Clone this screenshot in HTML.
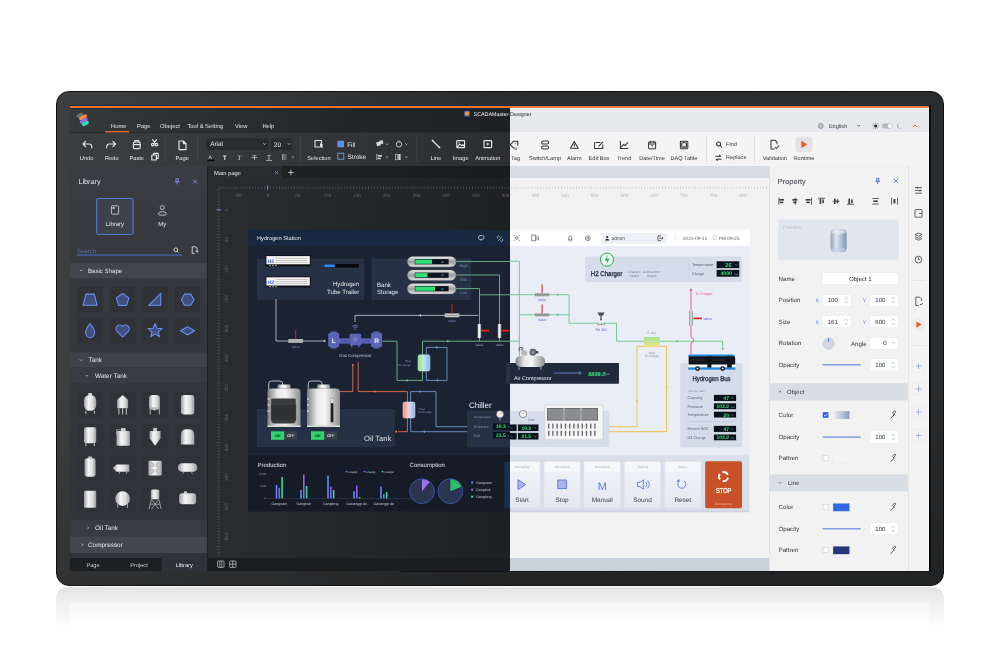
<!DOCTYPE html>
<html><head><meta charset="utf-8">
<style>
*{margin:0;padding:0;box-sizing:border-box}
html,body{width:1000px;height:667px;overflow:hidden;background:#fff;font-family:"Liberation Sans",sans-serif}
.a{position:absolute}
svg.a{will-change:transform;text-rendering:geometricPrecision}
.t{position:absolute;white-space:nowrap;line-height:1}
</style></head><body>
<!-- reflection -->
<div class="a" style="left:56px;top:587px;width:888px;height:15.5px;border-radius:12px 12px 0 0;background:linear-gradient(#e2e2e2,#ececec 60%,#f0f0f0);"></div><div class="a" style="left:56px;top:602.5px;width:888px;height:26px;background:linear-gradient(#f7f7f7,#fcfcfc 60%,#fff);"></div><div class="a" style="left:56px;top:602.5px;width:14px;height:26px;background:linear-gradient(#efefef,#fafafa 70%,#fff);"></div><div class="a" style="left:929px;top:602.5px;width:15px;height:26px;background:linear-gradient(#efefef,#fafafa 70%,#fff);"></div>
<!-- monitor -->
<div class="a" style="left:56px;top:91px;width:888px;height:495px;border-radius:13px;background:linear-gradient(180deg,rgba(0,0,0,0) 60%,rgba(0,0,0,.2) 100%),linear-gradient(90deg,#3d3e3f,#353637 22%,#2c2d2e 48%,#2a2b2c);border:1px solid #0e0f10"></div>
<!-- screen -->
<div class="a" style="left:928px;top:105px;width:2.5px;height:467px;background:#0c0d0e"></div><div class="a" style="left:400px;top:571px;width:530px;height:1px;background:#141516"></div>
<!-- orange line -->
<div class="a" style="left:70px;top:105px;width:440px;height:4px;background:#0b3050"></div><div class="a" style="left:510px;top:105px;width:419px;height:1px;background:#0b3050"></div><div class="a" style="left:70px;top:106px;width:859px;height:1.8px;background:#f47220"></div>


<!-- SEC1 dark title+ribbon -->
<div class="a" style="left:70px;top:109px;width:440px;height:23px;background:linear-gradient(90deg,#37383c,#2c2d31 35%,#242528 65%,#1f2023)"></div>
<div class="a" style="left:70px;top:132px;width:440px;height:34px;background:linear-gradient(90deg,#3b3d41,#343639 45%,#2c2e32);border-top:1px solid #2a2b2e"></div>
<svg class="a" style="left:0;top:0" width="1000" height="667" font-family="Liberation Sans">
 <!-- logo -->
 <g transform="translate(83.4,119.6) rotate(-28)">
  <rect x="-4.6" y="-7.2" width="7" height="3.4" rx="1.7" fill="#6e7176"/>
  <rect x="-3.6" y="-4" width="8.6" height="3.6" rx="1.8" fill="#f8903a"/>
  <rect x="-4.6" y="-0.6" width="8.6" height="3.6" rx="1.8" fill="#8d6cf2"/>
  <rect x="-3.8" y="2.6" width="7.4" height="3.6" rx="1.8" fill="#38e0a0"/>
 </g>
 <g fill="#e8e9ec" font-size="5.8">
  <text x="111" y="127.5">Home</text>
  <text x="137" y="127.5">Page</text>
  <text x="160" y="127.5">Obeject</text>
  <text x="187.4" y="127.5">Tool &amp; Setting</text>
  <text x="235" y="127.5">View</text>
  <text x="262.4" y="127.5">Help</text>
 </g>
 <rect x="105" y="131" width="24" height="1.4" fill="#f26a21"/>
 <!-- title -->
 <rect x="464" y="110.6" width="6" height="6" fill="#2b4fb0"/>
 <circle cx="467" cy="113.6" r="2.4" fill="#f7941d"/>
 <text x="473.6" y="115.6" font-size="5.35" fill="#f2f2f2">SCADAMaster-Designer</text>
 <!-- ribbon icons -->
 <g stroke="#e4e5e8" stroke-width="1.15" fill="none" stroke-linecap="round" stroke-linejoin="round">
  <!-- undo -->
  <path d="M83 144 l2.6 -2.6 M83 144 l2.6 2.6 M83 144 h6 a2.8 2.8 0 0 1 2.8 2.8 v1"/>
  <!-- redo -->
  <path d="M115.5 144 l-2.6 -2.6 M115.5 144 l-2.6 2.6 M115.5 144 h-6 a2.8 2.8 0 0 0 -2.8 2.8 v1"/>
  <!-- paste -->
  <rect x="133.4" y="142" width="6.8" height="6.6" rx="1.2"/>
  <path d="M134.8 142 v-1.4 h4 v1.4 M133.4 144.6 h6.8"/>
  <!-- cut -->
  <circle cx="152.8" cy="144.6" r="1.3"/><circle cx="156.4" cy="144.6" r="1.3"/>
  <path d="M153.6 143.6 l3 -4 M155.6 143.6 l-3 -4"/>
  <!-- copy -->
  <rect x="151.8" y="155" width="4.6" height="5" rx="0.6"/>
  <path d="M153.6 155 v-1.7 h4.6 v5 h-1.8"/>
  <!-- page -->
  <path d="M179 141 h4.4 l2.6 2.6 v6 h-7 z M183.4 141 v2.6 h2.6"/>
  <!-- selection -->
  <rect x="315" y="140.5" width="6.5" height="6.5" stroke-dasharray="1.2 0.6"/>
  <!-- line -->
  <path d="M432.5 140.5 l7 7"/>
  <!-- image -->
  <rect x="456.8" y="140.6" width="7.8" height="7" rx="0.6"/>
  <path d="M457.5 146.5 l2.4 -2.4 l1.8 1.6 l1.2 -1 l1.6 1.8"/>
  <!-- animation -->
  <rect x="484" y="140.6" width="7.6" height="7" rx="0.6"/>
 </g>
 <path d="M320 143.2 l3.5 1.6 l-1.5 0.6 l1.2 1.8 l-0.8 0.5 l-1.2 -1.8 l-1.2 1.1 z" fill="#e8e8e8"/>
 <circle cx="432.5" cy="140.5" r="0.9" fill="#d3d5d9"/><circle cx="439.5" cy="147.5" r="0.9" fill="#d3d5d9"/>
 <circle cx="459" cy="142.8" r="0.7" fill="#d3d5d9"/>
 <path d="M486.7 142.4 l3 1.7 l-3 1.7 z" fill="#d3d5d9"/>
 <g fill="#e9eaed" font-size="5.7" text-anchor="middle">
  <text x="86.6" y="160.2">Undo</text>
  <text x="111.9" y="160.2">Redo</text>
  <text x="136.7" y="160.2">Paste</text>
  <text x="182.2" y="160.2">Page</text>
  <text x="319" y="160.2">Selection</text>
  <text x="436" y="160.2">Line</text>
  <text x="460.7" y="160.2">Image</text>
  <text x="487.8" y="160.2">Animation</text>
 </g>
 <g fill="#45474c">
  <rect x="165" y="136" width="0.8" height="26"/>
  <rect x="197.2" y="136" width="0.8" height="26"/>
  <rect x="300" y="136" width="0.8" height="26"/>
  <rect x="416.6" y="136" width="0.8" height="26"/>
 </g>
 <!-- font boxes -->
 <rect x="206.8" y="138.3" width="61.4" height="11.5" fill="#2a2b2f"/>
 <rect x="271.2" y="138.3" width="21.4" height="11.5" fill="#2a2b2f"/>
 <text x="210.2" y="146.4" font-size="6.4" fill="#e6e7ea">Arial</text>
 <text x="273.8" y="146.6" font-size="6.6" fill="#e6e7ea">20</text>
 <g stroke="#d8dadd" stroke-width="0.75" fill="none">
  <path d="M263.4 143.4 l1.1 1.1 l1.1 -1.1 M288 143.4 l1.1 1.1 l1.1 -1.1"/>
  <path d="M291.6 156.6 l1.1 1.1 l1.1 -1.1"/>
  <path d="M386 143.6 l1.1 1.1 l1.1 -1.1 M405.4 143.6 l1.1 1.1 l1.1 -1.1 M386 156.6 l1.1 1.1 l1.1 -1.1 M405.4 156.6 l1.1 1.1 l1.1 -1.1"/>
 </g>
 <!-- format row -->
 <g fill="#e0e1e4" font-size="6.5">
  <text x="208.5" y="158.5" font-size="5">A</text>
  <text x="222.8" y="160" font-weight="bold">T</text>
  <text x="237.6" y="160" font-style="italic" font-family="Liberation Serif">T</text>
  <text x="252.4" y="160">T</text>
  <text x="267" y="160">T</text>
 </g>
 <rect x="207.3" y="159.6" width="7.2" height="1.6" fill="#0a0a0a"/>
 <rect x="251.4" y="157" width="6" height="0.6" fill="#e0e1e4"/>
 <rect x="266" y="160.4" width="6" height="0.6" fill="#e0e1e4"/>
 <g fill="#9a9ca0"><rect x="282" y="154.5" width="4.5" height="1"/><rect x="282" y="156.5" width="4.5" height="1"/><rect x="282" y="158.5" width="4.5" height="1"/><rect x="282" y="154" width="1" height="6"/></g>
 <!-- fill / stroke -->
 <rect x="337.8" y="141" width="6" height="6" fill="#5b8ee6" stroke="#7aa5f0" stroke-width="0.5"/>
 <rect x="337.8" y="153.2" width="6" height="6" fill="none" stroke="#6d9be8" stroke-width="0.9"/>
 <text x="347.2" y="146.6" font-size="6.4" fill="#e6e7ea">Fill</text>
 <text x="347.6" y="158.8" font-size="6.4" fill="#e6e7ea">Stroke</text>
 <!-- group icons -->
 <g fill="#d3d5d9">
  <rect x="376.5" y="142" width="4" height="4" transform="rotate(-15 378 144)"/>
  <rect x="379.5" y="140.5" width="3.5" height="3.5" transform="rotate(-15 381 142)"/>
  <rect x="376.5" y="154" width="0.8" height="6"/><rect x="378" y="155" width="4" height="1.6"/><rect x="378" y="157.6" width="2.8" height="1.6"/>
  <rect x="395.5" y="154.2" width="1.8" height="5.6" fill="none" stroke="#d3d5d9" stroke-width="0.6"/><rect x="398.4" y="154" width="2.2" height="6"/>
 </g>
 <circle cx="399" cy="144.3" r="2.7" fill="none" stroke="#d3d5d9" stroke-width="0.9"/>
 <rect x="398.6" y="140.4" width="0.8" height="2" fill="#d3d5d9"/>
</svg>

<!-- LIGHT title bar -->
<div class="a" style="left:510px;top:108px;width:419px;height:24px;background:#e6e8ec"></div>

<!-- LIGHT ribbon -->
<div class="a" style="left:510px;top:132px;width:419px;height:34px;background:#f4f4f5"></div>

<!-- SEC2 light title+ribbon -->
<svg class="a" style="left:0;top:0" width="1000" height="667" font-family="Liberation Sans">
 <defs><clipPath id="cl"><rect x="510" y="100" width="420" height="40"/></clipPath></defs>
 <rect x="510" y="107.8" width="419" height="1.2" fill="#e2f6f6"/>
 <text x="473.6" y="115.6" font-size="5.35" fill="#2e3034" clip-path="url(#cl)">SCADAMaster-Designer</text>
 <!-- title right -->
 <circle cx="820.8" cy="125.9" r="2.6" fill="#b9bcc3" stroke="#8f939a" stroke-width="0.6"/>
 <text x="828.9" y="128" font-size="5.6" fill="#3c3f44">English</text>
 <path d="M857.3 125 l1.3 1.3 l1.3 -1.3" stroke="#3c3f44" stroke-width="0.8" fill="none"/>
 <circle cx="875.7" cy="125.9" r="1.5" fill="#222"/>
 <g stroke="#222" stroke-width="0.6"><path d="M875.7 122.6 v1 M875.7 128.2 v1 M872.4 125.9 h1 M878 125.9 h1 M873.4 123.6 l0.7 0.7 M877.3 127.5 l0.7 0.7 M873.4 128.2 l0.7 -0.7 M877.3 124.3 l0.7 -0.7"/></g>
 <rect x="882" y="123.6" width="10.5" height="4.8" rx="2.4" fill="#b5b9c0"/>
 <circle cx="889.8" cy="126" r="2.1" fill="#fff"/>
 <path d="M899.6 123.4 a2.6 2.6 0 1 0 1.6 4.6 a2.2 2.2 0 0 1 -1.6 -4.6z" fill="#9ea3ab"/>
 <path d="M913 127 l2 -2 l2 2" stroke="#f05a22" stroke-width="0.9" fill="none"/>
 <!-- ribbon icons -->
 <g transform="translate(0 0.9)" stroke="#33363c" stroke-width="1.05" fill="none" stroke-linecap="round" stroke-linejoin="round">
  <!-- tag -->
  <path d="M513.4 140.4 h4.4 v4 M513.4 140.4 l-3 3.4 l3 3.4 h0.8"/>
  <!-- switch/lamp -->
  <rect x="541.6" y="140.2" width="7" height="3" rx="1.5"/><rect x="541.6" y="145.2" width="7" height="3" rx="1.5"/>
  <!-- alarm -->
  <path d="M574.3 140.6 l3.9 6.8 h-7.8 z M574.3 143 v2.1"/>
  <!-- edit box -->
  <path d="M596 141.6 h4 M602.8 144 v3.6 h-8.2 v-6"/>
  <path d="M598.8 145.3 l4 -4"/>
  <!-- trend -->
  <path d="M620.4 140.4 v7.2 h7.5 M621.6 146 l2 -2.6 l1.6 1.4 l2.4 -3"/>
  <!-- date/time -->
  <rect x="648.6" y="141" width="7" height="6.8" rx="0.8"/>
  <path d="M650.4 140 v1.6 M653.8 140 v1.6 M648.6 143 h7 M651.8 144.4 l0.8 0.8"/>
  <!-- daq table -->
  <rect x="680.4" y="140.4" width="7.4" height="7.4" rx="0.6"/>
  <rect x="681.8" y="141.8" width="4.6" height="4.6" rx="0.2"/>
  <!-- find -->
  <circle cx="718.6" cy="143" r="2"/><path d="M720.2 144.6 l1.6 1.6"/>
  <!-- replace -->
  <path d="M715.8 155.4 h5 l-1.2 -1.2 M721.2 158.4 h-5 l1.2 1.2"/>
  <!-- validation -->
  <path d="M777 142.8 v-1.6 l-1.8 -1.8 h-4.2 v8.6 h3.4 M771 139.4"/>
  <path d="M775.4 146.4 l1.2 1.2 l2.2 -2.8"/>
 </g>
 <circle cx="515.8" cy="143" r="0.6" fill="#33363c"/><text x="514.6" y="149.6" font-size="3.8" font-weight="bold" fill="#33363c">D</text>
 <path d="M682.8 146.6 l1.2 -1.2 l0.8 0.8 l0.8 -0.6 v1z" fill="#33363c"/>
 <rect x="795.5" y="136.7" width="17.2" height="15.3" rx="3" fill="#e4e4e6"/>
 <path d="M801.3 140.8 l6 3.6 l-6 3.6 z" fill="#f05a22"/>
 <g fill="#33363c" font-size="5.6" text-anchor="middle">
  <text x="515.5" y="160.2">Tag</text>
  <text x="545" y="160.2">Switch/Lamp</text>
  <text x="574.3" y="160.2">Alarm</text>
  <text x="599" y="160.2">Edit Box</text>
  <text x="624.1" y="160.2">Trend</text>
  <text x="652" y="160.2">Date/Time</text>
  <text x="684" y="160.2">DAQ Table</text>
  <text x="774.8" y="160.2">Validation</text>
  <text x="804" y="160.2">Runtime</text>
 </g>
 <text x="726" y="146" font-size="5.6" fill="#3c3f44">Find</text>
 <text x="726" y="159.2" font-size="5.6" fill="#3c3f44">Replace</text>
 <rect x="706" y="136" width="0.8" height="26" fill="#dcdde0"/>
 <rect x="754.2" y="136" width="0.8" height="26" fill="#dcdde0"/>
</svg>

<!-- DARK library panel -->
<div class="a" style="left:70px;top:166px;width:137px;height:392px;background:linear-gradient(#393c41,#34373c 40%,#303338)"></div>
<div class="a" style="left:207px;top:166px;width:1px;height:405px;background:#1f2023"></div>

<!-- SEC3 library -->
<svg class="a" style="left:0;top:0" width="1000" height="667" font-family="Liberation Sans">
 <defs>
  <linearGradient id="mg" x1="0" x2="1" y1="0" y2="0">
   <stop offset="0" stop-color="#9a9c9f"/><stop offset="0.35" stop-color="#f6f6f6"/><stop offset="0.7" stop-color="#dcdcdc"/><stop offset="1" stop-color="#9a9c9f"/>
  </linearGradient>
 </defs>
 <text x="78.5" y="184.2" font-size="7.2" fill="#e6e7ea">Library</text>
 <g stroke="#7b8cf0" stroke-width="0.9" fill="none">
  <path d="M175.4 178.8 h3.4 M176 178.8 v3 h2.2 v-3 M174.8 181.8 h4.6 M177.1 181.8 v2.6"/>
  <path d="M193 179.5 l4.2 4.2 M197.2 179.5 l-4.2 4.2"/>
 </g>
 <rect x="96.7" y="198.4" width="36.3" height="36" rx="1.5" fill="#3d424b" stroke="#5a7fd9" stroke-width="1"/>
 <rect x="111.4" y="205.8" width="7.2" height="8.4" rx="1" fill="none" stroke="#c8cbd1" stroke-width="0.9"/>
 <rect x="112.6" y="207" width="2" height="2" fill="#c8cbd1"/>
 <text x="114.9" y="226" font-size="6" fill="#e6e7ea" text-anchor="middle">Library</text>
 <g stroke="#c8cbd1" stroke-width="0.9" fill="none">
  <circle cx="162.3" cy="207.6" r="2"/>
  <path d="M158.3 214.2 a4 2.6 0 0 1 8 0 a4 1 0 0 1 -8 0"/>
 </g>
 <text x="162.3" y="226" font-size="6" fill="#e6e7ea" text-anchor="middle">My</text>
 <text x="77" y="252.6" font-size="6" fill="#5d6f9e">Search</text>
 <rect x="77" y="254.5" width="105" height="1" fill="#4b6fd0"/>
 <g stroke="#e0e2e6" stroke-width="0.9" fill="none">
  <circle cx="175.8" cy="249.8" r="1.9"/><path d="M177.2 251.2 l1.4 1.4"/>
  <path d="M192.2 246.8 h3.4 l1.4 1.4 v2.4 M192.2 246.8 v6.6 h2.4"/>
 </g>
 <path d="M195.6 251.4 h3 M197.1 249.9 v3" stroke="#e0e2e6" stroke-width="0.7"/>
 <!-- headers -->
 <rect x="70" y="262.7" width="137" height="15.7" fill="#41454c"/>
 <rect x="70" y="352.4" width="137" height="15.1" fill="#3f434a"/>
 <rect x="70" y="367.5" width="137" height="15.7" fill="#373b42"/>
 <rect x="70" y="519.4" width="137" height="17.1" fill="#373b42"/>
 <rect x="70" y="536.5" width="137" height="16.5" fill="#42474f"/>
 <g stroke="#b8bcc4" stroke-width="0.8" fill="none">
  <path d="M79.8 269.8 l1.3 1.3 l1.3 -1.3 M79.8 359.4 l1.3 1.3 l1.3 -1.3 M85.5 375 l1.3 1.3 l1.3 -1.3"/>
  <path d="M87.5 526.5 l1.3 1.3 l-1.3 1.3 M81.5 543.5 l1.3 1.3 l-1.3 1.3"/>
 </g>
 <g fill="#e6e7ea" font-size="6.4">
  <text x="88" y="272.8" font-size="6.1">Basic Shape</text>
  <text x="88.5" y="362.2">Tank</text>
  <text x="95" y="377.6">Water Tank</text>
  <text x="95" y="530.4">Oil Tank</text>
  <text x="88" y="547.2">Compressor</text>
 </g>
 <rect x="77.5" y="287" width="25.2" height="25.4" fill="#2f3237"/>
 <g transform="translate(90.1 299.7) scale(1.4) translate(-90.1 -299.7)"><path d="M87.1 295.7 h6 l2 8 h-10z" fill="#3e4f80" stroke="#6f90f2" stroke-width="0.75"/></g>
 <rect x="110" y="287" width="25.2" height="25.4" fill="#2f3237"/>
 <g transform="translate(122.6 299.7) scale(1.4) translate(-122.6 -299.7)"><path d="M122.6 295.2 l4.5 3.3 l-1.7 5.3 h-5.6 l-1.7 -5.3z" fill="#3e4f80" stroke="#6f90f2" stroke-width="0.75"/></g>
 <rect x="142.5" y="287" width="25.2" height="25.4" fill="#2f3237"/>
 <g transform="translate(155.1 299.7) scale(1.4) translate(-155.1 -299.7)"><path d="M159.1 295.2 v8.5 h-8.5z" fill="#3e4f80" stroke="#6f90f2" stroke-width="0.75"/></g>
 <rect x="175" y="287" width="25.2" height="25.4" fill="#2f3237"/>
 <g transform="translate(187.6 299.7) scale(1.4) translate(-187.6 -299.7)"><path d="M183.1 299.7 l2.3 -4 h4.5 l2.3 4 l-2.3 4 h-4.5z" fill="#3e4f80" stroke="#6f90f2" stroke-width="0.75"/></g>
 <rect x="77.5" y="318" width="25.2" height="25.4" fill="#2f3237"/>
 <g transform="translate(90.1 330.7) scale(1.4) translate(-90.1 -330.7)"><path d="M90.1 325.7 q4 5 3 7 a3 3 0 0 1 -6 0 q-1 -2 3 -7z" fill="#3e4f80" stroke="#6f90f2" stroke-width="0.75"/></g>
 <rect x="110" y="318" width="25.2" height="25.4" fill="#2f3237"/>
 <g transform="translate(122.6 330.7) scale(1.4) translate(-122.6 -330.7)"><path d="M122.6 335.2 l-4.2 -4.2 a2.4 2.4 0 0 1 4.2 -3.4 a2.4 2.4 0 0 1 4.2 3.4z" fill="#3e4f80" stroke="#6f90f2" stroke-width="0.75"/></g>
 <rect x="142.5" y="318" width="25.2" height="25.4" fill="#2f3237"/>
 <g transform="translate(155.1 330.7) scale(1.4) translate(-155.1 -330.7)"><path d="M155.1 325.7 l1.4 3.2 l3.5 0.3 l-2.7 2.3 l0.9 3.4 l-3.1 -1.8 l-3.1 1.8 l0.9 -3.4 l-2.7 -2.3 l3.5 -0.3z" fill="#3e4f80" stroke="#6f90f2" stroke-width="0.75"/></g>
 <rect x="175" y="318" width="25.2" height="25.4" fill="#2f3237"/>
 <g transform="translate(187.6 330.7) scale(1.4) translate(-187.6 -330.7)"><path d="M182.6 330.7 l5 -3 l5 3 l-5 3z" fill="#3e4f80" stroke="#6f90f2" stroke-width="0.75"/></g>
 <rect x="77.5" y="392" width="25.2" height="25.4" fill="#2f3237"/>
 <g transform="translate(90.1 404.7) scale(1.22) translate(-90.1 -404.7)"><rect x="85.1" y="396.7" width="10" height="13" rx="4.5" fill="url(#mg)"/><rect x="88.6" y="395.2" width="3" height="2" fill="#ddd"/><rect x="86.1" y="409.7" width="1" height="2.5" fill="#aaa"/><rect x="93.1" y="409.7" width="1" height="2.5" fill="#aaa"/></g>
 <rect x="110" y="392" width="25.2" height="25.4" fill="#2f3237"/>
 <g transform="translate(122.6 404.7) scale(1.22) translate(-122.6 -404.7)"><path d="M118.1 400.7 l4.5 -4 l4.5 4 v7 h-9z" fill="url(#mg)"/><rect x="119.1" y="407.7" width="0.9" height="5" fill="#bbb"/><rect x="122.1" y="407.7" width="0.9" height="5" fill="#bbb"/><rect x="125.19999999999999" y="407.7" width="0.9" height="5" fill="#bbb"/></g>
 <rect x="142.5" y="392" width="25.2" height="25.4" fill="#2f3237"/>
 <g transform="translate(155.1 404.7) scale(1.22) translate(-155.1 -404.7)"><rect x="150.1" y="396.7" width="9" height="12" rx="3" fill="url(#mg)"/><path d="M150.1 406.7 l4.5 3 l4.5 -3" fill="#bbb"/><rect x="150.6" y="407.7" width="0.9" height="5" fill="#aaa"/><rect x="158.1" y="407.7" width="0.9" height="5" fill="#aaa"/></g>
 <rect x="175" y="392" width="25.2" height="25.4" fill="#2f3237"/>
 <g transform="translate(187.6 404.7) scale(1.22) translate(-187.6 -404.7)"><rect x="182.1" y="396.7" width="11" height="16" rx="2.5" fill="url(#mg)"/></g>
 <rect x="77.5" y="424.4" width="25.2" height="25.4" fill="#2f3237"/>
 <g transform="translate(90.1 437.09999999999997) scale(1.22) translate(-90.1 -437.09999999999997)"><rect x="85.1" y="429.09999999999997" width="10" height="13" rx="1.5" fill="url(#mg)"/><rect x="86.1" y="442.09999999999997" width="1" height="2.5" fill="#aaa"/><rect x="93.1" y="442.09999999999997" width="1" height="2.5" fill="#aaa"/></g>
 <rect x="110" y="424.4" width="25.2" height="25.4" fill="#2f3237"/>
 <g transform="translate(122.6 437.09999999999997) scale(1.22) translate(-122.6 -437.09999999999997)"><rect x="117.6" y="432.09999999999997" width="11" height="12" rx="1" fill="url(#mg)"/><rect x="121.1" y="429.59999999999997" width="4" height="3" rx="1" fill="#ccc"/><path d="M117.6 435.09999999999997 v-4 h3" stroke="#aaa" stroke-width="0.6" fill="none"/></g>
 <rect x="142.5" y="424.4" width="25.2" height="25.4" fill="#2f3237"/>
 <g transform="translate(155.1 437.09999999999997) scale(1.22) translate(-155.1 -437.09999999999997)"><path d="M150.6 432.09999999999997 h9 v6 l-4.5 6 l-4.5 -6z" fill="url(#mg)"/><rect x="153.6" y="429.59999999999997" width="3" height="2.5" fill="#ccc"/></g>
 <rect x="175" y="424.4" width="25.2" height="25.4" fill="#2f3237"/>
 <g transform="translate(187.6 437.09999999999997) scale(1.22) translate(-187.6 -437.09999999999997)"><path d="M182.1 435.09999999999997 q0 -4 4 -4.5 h3 q4 0.5 4 4.5 v8 h-11z" fill="url(#mg)"/></g>
 <rect x="77.5" y="455.4" width="25.2" height="25.4" fill="#2f3237"/>
 <g transform="translate(90.1 468.09999999999997) scale(1.22) translate(-90.1 -468.09999999999997)"><rect x="85.6" y="460.09999999999997" width="9" height="15" rx="2" fill="url(#mg)"/><rect x="88.6" y="458.59999999999997" width="3" height="2" fill="#ccc"/></g>
 <rect x="110" y="455.4" width="25.2" height="25.4" fill="#2f3237"/>
 <g transform="translate(122.6 468.09999999999997) scale(1.22) translate(-122.6 -468.09999999999997)"><path d="M114.6 468.09999999999997 l3 -3 h10.5 v6 h-10.5z" fill="url(#mg)"/><rect x="119.6" y="471.09999999999997" width="0.8" height="1.5" fill="#aaa"/><rect x="125.6" y="471.09999999999997" width="0.8" height="1.5" fill="#aaa"/></g>
 <rect x="142.5" y="455.4" width="25.2" height="25.4" fill="#2f3237"/>
 <g transform="translate(155.1 468.09999999999997) scale(1.22) translate(-155.1 -468.09999999999997)"><rect x="149.6" y="462.09999999999997" width="11" height="12" rx="1" fill="url(#mg)"/><circle cx="152.5" cy="465.49999999999994" r="1.8" fill="#c9c9c9" stroke="#999" stroke-width="0.3"/><circle cx="152.5" cy="470.7" r="1.8" fill="#c9c9c9" stroke="#999" stroke-width="0.3"/><circle cx="157.7" cy="465.49999999999994" r="1.8" fill="#c9c9c9" stroke="#999" stroke-width="0.3"/><circle cx="157.7" cy="470.7" r="1.8" fill="#c9c9c9" stroke="#999" stroke-width="0.3"/></g>
 <rect x="175" y="455.4" width="25.2" height="25.4" fill="#2f3237"/>
 <g transform="translate(187.6 468.09999999999997) scale(1.22) translate(-187.6 -468.09999999999997)"><rect x="179.6" y="464.09999999999997" width="16" height="7" rx="3.5" fill="url(#mg)"/><path d="M184.6 471.09999999999997 l-1 2 M190.6 471.09999999999997 l1 2" stroke="#aaa" stroke-width="0.6"/></g>
 <rect x="77.5" y="486.6" width="25.2" height="25.4" fill="#2f3237"/>
 <g transform="translate(90.1 499.3) scale(1.22) translate(-90.1 -499.3)"><rect x="85.1" y="492.3" width="10" height="14" rx="1" fill="url(#mg)"/></g>
 <rect x="110" y="486.6" width="25.2" height="25.4" fill="#2f3237"/>
 <g transform="translate(122.6 499.3) scale(1.22) translate(-122.6 -499.3)"><circle cx="122.6" cy="498.8" r="6" fill="url(#mg)"/><path d="M118.6 503.3 v3 M126.6 503.3 v3" stroke="#aaa" stroke-width="0.8"/></g>
 <rect x="142.5" y="486.6" width="25.2" height="25.4" fill="#2f3237"/>
 <g transform="translate(155.1 499.3) scale(1.22) translate(-155.1 -499.3)"><rect x="151.6" y="491.3" width="7" height="8" rx="1.5" fill="url(#mg)"/><path d="M152.1 499.3 l-2 8 M158.1 499.3 l2 8 M151.1 503.3 h8 M152.1 499.3 l6 8 M158.1 499.3 l-6 8" stroke="#bbb" stroke-width="0.6" fill="none"/></g>
 <rect x="175" y="486.6" width="25.2" height="25.4" fill="#2f3237"/>
 <g transform="translate(187.6 499.3) scale(1.22) translate(-187.6 -499.3)"><rect x="180.6" y="494.3" width="14" height="9" rx="2.5" fill="url(#mg)"/><rect x="184.6" y="492.8" width="2.5" height="2" fill="#ccc"/></g>
 <!-- bottom tabs -->
 <rect x="70" y="558" width="137" height="13" fill="#1e1f22"/>
 <rect x="161.5" y="558" width="45.5" height="13" fill="#2e3136"/>
 <g fill="#c9cbd0" font-size="5.6" text-anchor="middle">
  <text x="93" y="566.6">Page</text>
  <text x="139" y="566.6">Project</text>
  <text x="184.2" y="566.6" fill="#f2f3f6">Library</text>
 </g>
</svg>

<!-- DARK canvas -->
<div class="a" style="left:208px;top:166px;width:302px;height:12px;background:linear-gradient(90deg,#222326,#1a1b1e)"></div>
<div class="a" style="left:208px;top:166px;width:74px;height:12px;background:#2a2b2f"></div>
<div class="a" style="left:208px;top:178px;width:302px;height:380px;background:linear-gradient(90deg,#2b2c30,#26272b 45%,#1f2024)"></div>
<!-- dark hydrogen panel -->
<div class="a" style="left:248px;top:230px;width:262px;height:281px;background:#1b2330"></div>
<!-- DARK status -->
<div class="a" style="left:208px;top:558px;width:302px;height:13px;background:#1c1d20"></div>
<!-- SEC4 dark canvas -->
<svg class="a" style="left:0;top:0" width="1000" height="667" font-family="Liberation Sans">
<defs><clipPath id="cd"><rect x="208" y="166" width="302" height="405"/></clipPath><linearGradient id="mg2" x1="0" x2="1"><stop offset="0" stop-color="#7d7f83"/><stop offset="0.3" stop-color="#e8e8e8"/><stop offset="0.55" stop-color="#f6f6f6"/><stop offset="1" stop-color="#8c8e91"/></linearGradient><linearGradient id="cap" x1="0" x2="0" y1="0" y2="1"><stop offset="0" stop-color="#f0f0f0"/><stop offset="0.5" stop-color="#9a9b9e"/><stop offset="1" stop-color="#e2e2e2"/></linearGradient><linearGradient id="hx1" x1="0" x2="1"><stop offset="0" stop-color="#8ee08a"/><stop offset="0.5" stop-color="#c6f0d0"/><stop offset="0.55" stop-color="#b8dcf5"/><stop offset="1" stop-color="#7fb8ec"/></linearGradient><linearGradient id="hx2" x1="0" x2="1"><stop offset="0" stop-color="#f0908a"/><stop offset="0.5" stop-color="#f8d0cc"/><stop offset="0.55" stop-color="#c8dcf5"/><stop offset="1" stop-color="#8cb4ea"/></linearGradient></defs>
<g clip-path="url(#cd)">
<text x="214" y="175" font-size="5.8" fill="#e8e9ec">Main page</text>
<path d="M274.8 170.8 l3.4 3.4 M278.2 170.8 l-3.4 3.4" stroke="#7b8cf0" stroke-width="0.8"/>
<path d="M288.2 172.5 h5.4 M290.9 169.8 v5.4" stroke="#e0e2e6" stroke-width="0.8"/>
<path d="M220.00 186.20 v3.2 M222.97 186.70 v2.2 M225.94 186.70 v2.2 M228.91 186.70 v2.2 M231.88 186.70 v2.2 M234.85 186.20 v3.2 M237.82 186.70 v2.2 M240.79 186.70 v2.2 M243.76 186.70 v2.2 M246.73 186.70 v2.2 M249.70 186.20 v3.2 M252.67 186.70 v2.2 M255.64 186.70 v2.2 M258.61 186.70 v2.2 M261.58 186.70 v2.2 M264.55 186.20 v3.2 M267.52 186.70 v2.2 M270.49 186.70 v2.2 M273.46 186.70 v2.2 M276.43 186.70 v2.2 M279.40 186.20 v3.2 M282.37 186.70 v2.2 M285.34 186.70 v2.2 M288.31 186.70 v2.2 M291.28 186.70 v2.2 M294.25 186.20 v3.2 M297.22 186.70 v2.2 M300.19 186.70 v2.2 M303.16 186.70 v2.2 M306.13 186.70 v2.2 M309.10 186.20 v3.2 M312.07 186.70 v2.2 M315.04 186.70 v2.2 M318.01 186.70 v2.2 M320.98 186.70 v2.2 M323.95 186.20 v3.2 M326.92 186.70 v2.2 M329.89 186.70 v2.2 M332.86 186.70 v2.2 M335.83 186.70 v2.2 M338.80 186.20 v3.2 M341.77 186.70 v2.2 M344.74 186.70 v2.2 M347.71 186.70 v2.2 M350.68 186.70 v2.2 M353.65 186.20 v3.2 M356.62 186.70 v2.2 M359.59 186.70 v2.2 M362.56 186.70 v2.2 M365.53 186.70 v2.2 M368.50 186.20 v3.2 M371.47 186.70 v2.2 M374.44 186.70 v2.2 M377.41 186.70 v2.2 M380.38 186.70 v2.2 M383.35 186.20 v3.2 M386.32 186.70 v2.2 M389.29 186.70 v2.2 M392.26 186.70 v2.2 M395.23 186.70 v2.2 M398.20 186.20 v3.2 M401.17 186.70 v2.2 M404.14 186.70 v2.2 M407.11 186.70 v2.2 M410.08 186.70 v2.2 M413.05 186.20 v3.2 M416.02 186.70 v2.2 M418.99 186.70 v2.2 M421.96 186.70 v2.2 M424.93 186.70 v2.2 M427.90 186.20 v3.2 M430.87 186.70 v2.2 M433.84 186.70 v2.2 M436.81 186.70 v2.2 M439.78 186.70 v2.2 M442.75 186.20 v3.2 M445.72 186.70 v2.2 M448.69 186.70 v2.2 M451.66 186.70 v2.2 M454.63 186.70 v2.2 M457.60 186.20 v3.2 M460.57 186.70 v2.2 M463.54 186.70 v2.2 M466.51 186.70 v2.2 M469.48 186.70 v2.2 M472.45 186.20 v3.2 M475.42 186.70 v2.2 M478.39 186.70 v2.2 M481.36 186.70 v2.2 M484.33 186.70 v2.2 M487.30 186.20 v3.2 M490.27 186.70 v2.2 M493.24 186.70 v2.2 M496.21 186.70 v2.2 M499.18 186.70 v2.2 M502.15 186.20 v3.2 M505.12 186.70 v2.2 M508.09 186.70 v2.2 M511.06 186.70 v2.2" stroke="#55575c" stroke-width="0.7"/>
<path d="M217.00 190.00 h3.2 M217.50 192.97 h2.2 M217.50 195.94 h2.2 M217.50 198.91 h2.2 M217.50 201.88 h2.2 M217.00 204.85 h3.2 M217.50 207.82 h2.2 M217.50 210.79 h2.2 M217.50 213.76 h2.2 M217.50 216.73 h2.2 M217.00 219.70 h3.2 M217.50 222.67 h2.2 M217.50 225.64 h2.2 M217.50 228.61 h2.2 M217.50 231.58 h2.2 M217.00 234.55 h3.2 M217.50 237.52 h2.2 M217.50 240.49 h2.2 M217.50 243.46 h2.2 M217.50 246.43 h2.2 M217.00 249.40 h3.2 M217.50 252.37 h2.2 M217.50 255.34 h2.2 M217.50 258.31 h2.2 M217.50 261.28 h2.2 M217.00 264.25 h3.2 M217.50 267.22 h2.2 M217.50 270.19 h2.2 M217.50 273.16 h2.2 M217.50 276.13 h2.2 M217.00 279.10 h3.2 M217.50 282.07 h2.2 M217.50 285.04 h2.2 M217.50 288.01 h2.2 M217.50 290.98 h2.2 M217.00 293.95 h3.2 M217.50 296.92 h2.2 M217.50 299.89 h2.2 M217.50 302.86 h2.2 M217.50 305.83 h2.2 M217.00 308.80 h3.2 M217.50 311.77 h2.2 M217.50 314.74 h2.2 M217.50 317.71 h2.2 M217.50 320.68 h2.2 M217.00 323.65 h3.2 M217.50 326.62 h2.2 M217.50 329.59 h2.2 M217.50 332.56 h2.2 M217.50 335.53 h2.2 M217.00 338.50 h3.2 M217.50 341.47 h2.2 M217.50 344.44 h2.2 M217.50 347.41 h2.2 M217.50 350.38 h2.2 M217.00 353.35 h3.2 M217.50 356.32 h2.2 M217.50 359.29 h2.2 M217.50 362.26 h2.2 M217.50 365.23 h2.2 M217.00 368.20 h3.2 M217.50 371.17 h2.2 M217.50 374.14 h2.2 M217.50 377.11 h2.2 M217.50 380.08 h2.2 M217.00 383.05 h3.2 M217.50 386.02 h2.2 M217.50 388.99 h2.2 M217.50 391.96 h2.2 M217.50 394.93 h2.2 M217.00 397.90 h3.2 M217.50 400.87 h2.2 M217.50 403.84 h2.2 M217.50 406.81 h2.2 M217.50 409.78 h2.2 M217.00 412.75 h3.2 M217.50 415.72 h2.2 M217.50 418.69 h2.2 M217.50 421.66 h2.2 M217.50 424.63 h2.2 M217.00 427.60 h3.2 M217.50 430.57 h2.2 M217.50 433.54 h2.2 M217.50 436.51 h2.2 M217.50 439.48 h2.2 M217.00 442.45 h3.2 M217.50 445.42 h2.2 M217.50 448.39 h2.2 M217.50 451.36 h2.2 M217.50 454.33 h2.2 M217.00 457.30 h3.2 M217.50 460.27 h2.2 M217.50 463.24 h2.2 M217.50 466.21 h2.2 M217.50 469.18 h2.2 M217.00 472.15 h3.2 M217.50 475.12 h2.2 M217.50 478.09 h2.2 M217.50 481.06 h2.2 M217.50 484.03 h2.2 M217.00 487.00 h3.2 M217.50 489.97 h2.2 M217.50 492.94 h2.2 M217.50 495.91 h2.2 M217.50 498.88 h2.2 M217.00 501.85 h3.2 M217.50 504.82 h2.2 M217.50 507.79 h2.2 M217.50 510.76 h2.2 M217.50 513.73 h2.2 M217.00 516.70 h3.2 M217.50 519.67 h2.2 M217.50 522.64 h2.2 M217.50 525.61 h2.2 M217.50 528.58 h2.2 M217.00 531.55 h3.2 M217.50 534.52 h2.2 M217.50 537.49 h2.2 M217.50 540.46 h2.2 M217.50 543.43 h2.2 M217.00 546.40 h3.2 M217.50 549.37 h2.2 M217.50 552.34 h2.2 M217.50 555.31 h2.2" stroke="#55575c" stroke-width="0.7"/>
<rect x="267.2" y="185.6" width="1" height="4.4" fill="#7d8cf0"/>
<rect x="216.4" y="209.3" width="4.4" height="1" fill="#7d8cf0"/>
<g font-size="4.6" fill="#66686d"><text x="238.3" y="196.8" text-anchor="middle">-50</text><text x="268.0" y="196.8" text-anchor="middle">0</text><text x="297.7" y="196.8" text-anchor="middle">50</text><text x="327.4" y="196.8" text-anchor="middle">100</text><text x="357.1" y="196.8" text-anchor="middle">150</text><text x="386.8" y="196.8" text-anchor="middle">200</text><text x="416.5" y="196.8" text-anchor="middle">250</text><text x="446.2" y="196.8" text-anchor="middle">300</text><text x="475.9" y="196.8" text-anchor="middle">350</text><text x="505.6" y="196.8" text-anchor="middle">400</text><text transform="translate(226.5 209.7) rotate(-90)" text-anchor="middle" y="1.6">0</text><text transform="translate(226.5 239.4) rotate(-90)" text-anchor="middle" y="1.6">50</text><text transform="translate(226.5 269.1) rotate(-90)" text-anchor="middle" y="1.6">100</text><text transform="translate(226.5 298.8) rotate(-90)" text-anchor="middle" y="1.6">150</text><text transform="translate(226.5 328.5) rotate(-90)" text-anchor="middle" y="1.6">200</text><text transform="translate(226.5 358.2) rotate(-90)" text-anchor="middle" y="1.6">250</text><text transform="translate(226.5 387.9) rotate(-90)" text-anchor="middle" y="1.6">300</text><text transform="translate(226.5 417.6) rotate(-90)" text-anchor="middle" y="1.6">350</text><text transform="translate(226.5 447.3) rotate(-90)" text-anchor="middle" y="1.6">400</text><text transform="translate(226.5 477.0) rotate(-90)" text-anchor="middle" y="1.6">450</text><text transform="translate(226.5 506.7) rotate(-90)" text-anchor="middle" y="1.6">500</text><text transform="translate(226.5 536.4) rotate(-90)" text-anchor="middle" y="1.6">550</text></g>
<rect x="248.2" y="230.4" width="262" height="281" fill="#1b2332"/>
<rect x="248.2" y="230.4" width="262" height="15.3" fill="#172840"/>
<rect x="248.2" y="454.8" width="262" height="56.6" fill="#151c27"/>
<text x="257" y="240.4" font-size="5.7" fill="#eef0f4">Hydrogen Station</text>
<g stroke="#c5c9d2" stroke-width="0.8" fill="none"><rect x="478.5" y="235.6" width="5.5" height="3.8" rx="1.5"/><path d="M481.2 239.4 v1.6"/><path d="M498.2 240.6 l3.6 -3.6 M497.6 238.6 a1.3 1.3 0 0 1 2 -2 M502.4 239 a1.3 1.3 0 0 1 -2 2"/></g>
<rect x="257.4" y="259.2" width="106.4" height="40" fill="#263145" stroke="#2e3a50" stroke-width="0.6"/>
<rect x="372" y="259" width="98.9" height="40.3" fill="#263145" stroke="#2e3a50" stroke-width="0.6"/>
<rect x="265.6" y="255.3" width="45" height="11" fill="#0d0f14"/>
<rect x="266.4" y="256.1" width="43.4" height="8.2" fill="#f4f4f2"/>
<text x="267.6" y="262.5" font-size="5.2" fill="#4d6be8" font-weight="bold">H2</text>
<path d="M275.5 258.3 h32 M275.5 260.3 h32 M275.5 262.3 h32" stroke="#9a9a9a" stroke-width="0.5"/>
<circle cx="270" cy="265.5" r="0.7" fill="#ddd"/><circle cx="273" cy="265.5" r="0.7" fill="#ddd"/><circle cx="276" cy="265.5" r="0.7" fill="#ddd"/>
<rect x="265.6" y="276.5" width="45" height="11" fill="#0d0f14"/>
<rect x="266.4" y="277.3" width="43.4" height="8.2" fill="#f4f4f2"/>
<text x="267.6" y="283.7" font-size="5.2" fill="#4d6be8" font-weight="bold">H2</text>
<path d="M275.5 279.5 h32 M275.5 281.5 h32 M275.5 283.5 h32" stroke="#9a9a9a" stroke-width="0.5"/>
<circle cx="270" cy="286.7" r="0.7" fill="#ddd"/><circle cx="273" cy="286.7" r="0.7" fill="#ddd"/><circle cx="276" cy="286.7" r="0.7" fill="#ddd"/>
<rect x="324" y="264" width="34.6" height="3.6" fill="#06080c"/><rect x="324.3" y="264.4" width="10.5" height="2.8" fill="#2f8cf0"/>
<g font-size="6.1" fill="#e2e6ee" text-anchor="end"><text x="359.4" y="286.2">Hydrogen</text><text x="359.4" y="293.6">Tube Trailer</text></g>
<g font-size="6.1" fill="#e2e6ee"><text x="377" y="286.6">Bank</text><text x="377" y="293.6">Storage</text></g>
<rect x="407.3" y="256.4" width="48.8" height="10.6" rx="5.3" fill="url(#cap)" stroke="#5f6063" stroke-width="0.4"/>
<rect x="414.8" y="259.09999999999997" width="33.8" height="5.2" fill="#0b1320"/>
<rect x="415.3" y="259.59999999999997" width="16.69999999999999" height="4.2" fill="#2ee076"/>
<text x="444" y="262.9" font-size="2.6" fill="#36e07a" text-anchor="end">82</text>
<rect x="407.3" y="269.9" width="48.8" height="10.6" rx="5.3" fill="url(#cap)" stroke="#5f6063" stroke-width="0.4"/>
<rect x="414.8" y="272.59999999999997" width="33.8" height="5.2" fill="#0b1320"/>
<rect x="415.3" y="273.09999999999997" width="12.199999999999989" height="4.2" fill="#2ee076"/>
<text x="444" y="276.4" font-size="2.6" fill="#36e07a" text-anchor="end">82</text>
<rect x="407.3" y="283.4" width="48.8" height="10.6" rx="5.3" fill="url(#cap)" stroke="#5f6063" stroke-width="0.4"/>
<rect x="414.8" y="286.09999999999997" width="33.8" height="5.2" fill="#0b1320"/>
<rect x="415.3" y="286.59999999999997" width="19.69999999999999" height="4.2" fill="#2ee076"/>
<text x="444" y="289.9" font-size="2.6" fill="#36e07a" text-anchor="end">82</text>
<g font-size="4" fill="#7d88a8" text-anchor="middle"><text x="463.6" y="267.4">High</text><text x="463.6" y="280.8">Mid</text><text x="463.6" y="294">Low</text></g>
<g stroke="#77b58e" stroke-width="0.9" fill="none"><path d="M456 261.5 H512"/><path d="M456 275 H499.5 V341.2"/><path d="M456 288.6 H479.5 V341.2"/><path d="M479.5 294.8 H512"/><path d="M382 341.2 H397 V380.4 H422.5 V341.2 H512"/></g>
<path d="M447 339.8 l2.6 1.4 l-2.6 1.4z M406.5 379 l2.6 1.4 l-2.6 1.4z" fill="#77b58e"/>
<g stroke="#b9bcc2" stroke-width="0.9" fill="none"><path d="M276 299.2 V341 H323"/><path d="M355 322 V315.4 H478.5"/></g>
<path d="M323.5 339.6 l2.6 1.4 l-2.6 1.4z M421 314 l-2.6 1.4 l2.6 1.4z" fill="#c9ccd2"/>
<rect x="288.3" y="339.2" width="14.8" height="3.6" rx="0.6" fill="url(#cap)"/>
<rect x="295.2" y="330" width="1" height="9.2" fill="#e02020"/>
<text x="295.7" y="347.6" font-size="3.4" fill="#7f8fc8" text-anchor="middle">Valve</text>
<rect x="444.6" y="313.59999999999997" width="14.8" height="3.6" rx="0.6" fill="url(#cap)"/>
<rect x="451.5" y="304.4" width="1" height="9.2" fill="#e02020"/>
<text x="452" y="322.0" font-size="3.4" fill="#7f8fc8" text-anchor="middle">Valve</text>
<rect x="477.5" y="324" width="3.6" height="14" rx="0.6" fill="url(#mg2)"/>
<rect x="481.1" y="329.8" width="8" height="1.8" fill="#e02020"/>
<text x="479.3" y="346" font-size="3.4" fill="#9aa3bd" text-anchor="middle">Valve</text>
<rect x="497.7" y="324" width="3.6" height="14" rx="0.6" fill="url(#mg2)"/>
<rect x="501.3" y="329.8" width="8" height="1.8" fill="#e02020"/>
<text x="499.5" y="346" font-size="3.4" fill="#9aa3bd" text-anchor="middle">Valve</text>
<g fill="#5c64b6"><rect x="328.2" y="333" width="11" height="14" rx="1.2"/><rect x="330.5" y="331.4" width="6.4" height="17.2" rx="1"/><rect x="371" y="333" width="11" height="14" rx="1.2"/><rect x="373.3" y="331.4" width="6.4" height="17.2" rx="1"/><rect x="349.5" y="333.8" width="11.6" height="11.4" rx="1"/><rect x="351" y="345" width="1.4" height="2.2"/><rect x="358" y="345" width="1.4" height="2.2"/><rect x="339" y="338.4" width="10.6" height="5.2"/><rect x="361" y="338.4" width="10.2" height="5.2"/></g>
<path d="M341 341 h7 M362.5 341 h7" stroke="#2b3270" stroke-width="0.8" stroke-dasharray="1.6 1"/>
<circle cx="355.3" cy="339.6" r="1.6" fill="none" stroke="#aeb4ee" stroke-width="0.5"/>
<g font-size="6.6" font-weight="bold" fill="#f0f2ff" text-anchor="middle"><text x="333.8" y="342.6">L</text><text x="376.6" y="342.8">R</text></g>
<g stroke="#8a96e6" stroke-width="0.7" fill="none"><path d="M352.4 326.4 a4 4 0 0 1 5.8 0 M353.5 327.8 a2.3 2.3 0 0 1 3.6 0"/></g><circle cx="355.3" cy="329.2" r="0.6" fill="#8a96e6"/>
<text x="355.3" y="357.4" font-size="4.3" fill="#c6cbd8" text-anchor="middle">Gas Compressor</text>
<rect x="418" y="354.8" width="12" height="16.2" rx="1.8" fill="url(#hx1)" stroke="#dfe8f0" stroke-width="0.5"/>
<g font-size="3" fill="#7d88a8" text-anchor="end"><text x="411" y="362.4">Heat</text><text x="411" y="365.8">Exchange</text></g>
<path d="M426.3 370.9 V380.4 H447 V347.4 H426.3 V354.8" stroke="#6e95c8" stroke-width="0.9" fill="none"/>
<path d="M436 346 l2.4 1.4 l-2.4 1.4z M438 379 l-2.4 1.4 l2.4 1.4z" fill="#6e95c8"/>
<g stroke="#e0724a" stroke-width="0.9" fill="none"><path d="M352.8 365 V391.6 H335"/><path d="M358.2 362 V391.6 H407.4 V431.7 H398"/></g>
<circle cx="352.8" cy="365" r="1" fill="#e0724a"/><path d="M374 390.2 l2.4 1.4 l-2.4 1.4z M397 430.3 l-2.4 1.4 l2.4 1.4z" fill="#e0724a"/>
<rect x="403" y="402" width="12" height="16" rx="1.8" fill="url(#hx2)" stroke="#e8e0e0" stroke-width="0.5"/>
<g font-size="3" fill="#7d88a8"><text x="418.6" y="409.8">Heat</text><text x="418.6" y="413.2">Exchange</text></g>
<path d="M410.6 402 V391.6 H436 V426.7 H512 M410.6 418 V431.7 H512" stroke="#6e95c8" stroke-width="0.9" fill="none"/>
<path d="M419 390.2 l2.4 1.4 l-2.4 1.4z M425 430.3 l-2.4 1.4 l2.4 1.4z" fill="#6e95c8"/>
<text x="469" y="408.4" font-size="8" fill="#eef0f4">Chiller</text>
<rect x="467.3" y="411" width="50" height="36" fill="#263145" stroke="#2e3a50" stroke-width="0.6"/>
<g font-size="3.6" fill="#8d97b0"><text x="474" y="418.4" font-size="3">Temperature</text><text x="474" y="428">Entrance</text><text x="474" y="436.6">Exit</text></g>
<circle cx="500" cy="414.2" r="3.4" fill="#f2f2f2" stroke="#888" stroke-width="0.5"/><path d="M500 414.2 l1.4 -1.6" stroke="#c03030" stroke-width="0.5"/><rect x="499.6" y="417.6" width="0.8" height="3" fill="#ccc"/>
<rect x="493" y="423.4" width="17.4" height="6.4" fill="#08121c"/>
<text x="496" y="428.4" font-size="5" fill="#36e07a" font-weight="bold">19.3</text>
<text x="506.5" y="428.0" font-size="3.2" fill="#8aa">°c</text>
<rect x="493" y="432" width="17.4" height="6.4" fill="#08121c"/>
<text x="496" y="437" font-size="5" fill="#36e07a" font-weight="bold">21.5</text>
<text x="506.5" y="436.6" font-size="3.2" fill="#8aa">°c</text>
<rect x="257.1" y="409.3" width="137" height="37.1" fill="#263145" stroke="#2e3a50" stroke-width="0.6"/><path d="M268.7 398 V384 q0 -3 3 -3 h8 q3 0 3 3 v2" stroke="#b8babe" stroke-width="1" fill="none"/>
<rect x="277.5" y="384.6" width="13" height="4" rx="1.2" fill="url(#mg2)"/>
<path d="M267.5 392 q0 -3 4 -3.4 h25 q4 0.4 4 3.4 v34.7 h-33z" fill="url(#mg2)"/>
<rect x="267.5" y="425.4" width="33" height="1.6" fill="#d8d8d8"/>
<path d="M267.5 399 h2 M267.5 405 h2 M267.5 411 h2" stroke="#f2f2f2" stroke-width="1.2"/>
<path d="M308.2 398 V384 q0 -3 3 -3 h8 q3 0 3 3 v2" stroke="#b8babe" stroke-width="1" fill="none"/>
<rect x="317" y="384.6" width="13" height="4" rx="1.2" fill="url(#mg2)"/>
<path d="M307 392 q0 -3 4 -3.4 h25 q4 0.4 4 3.4 v34.7 h-33z" fill="url(#mg2)"/>
<rect x="307" y="425.4" width="33" height="1.6" fill="#d8d8d8"/>
<path d="M307 399 h2 M307 405 h2 M307 411 h2" stroke="#f2f2f2" stroke-width="1.2"/>
<path d="M270.8 399.6 q0 -1.4 1.4 -1.4 h22.6 q1.4 0 1.4 1.4 v20.6 q0 3.6 -3.6 3.6 h-18.2 q-3.6 0 -3.6 -3.6z" fill="#3a3b3d" stroke="#c8c8c8" stroke-width="0.6"/>
<rect x="270.8" y="405" width="25.4" height="15" fill="#2c2d2f" opacity="0.7"/>
<rect x="330.4" y="398.4" width="3.4" height="24" fill="#1e1f21" stroke="#ddd" stroke-width="0.4"/><rect x="330.6" y="398.6" width="3" height="4.6" fill="#e0e0e0"/>

<rect x="271" y="431.3" width="13.5" height="8.5" fill="#30d46a"/><rect x="284.5" y="431.3" width="12.5" height="8.5" fill="#3a3e48"/>
<text x="277.75" y="437.2" font-size="3.8" fill="#0b3318" text-anchor="middle" font-weight="bold">ON</text>
<text x="290.75" y="437.2" font-size="3.8" fill="#e6e6e6" text-anchor="middle" font-weight="bold">OFF</text>
<rect x="311" y="431.3" width="13.5" height="8.5" fill="#30d46a"/><rect x="324.5" y="431.3" width="12.5" height="8.5" fill="#3a3e48"/>
<text x="317.75" y="437.2" font-size="3.8" fill="#0b3318" text-anchor="middle" font-weight="bold">ON</text>
<text x="330.75" y="437.2" font-size="3.8" fill="#e6e6e6" text-anchor="middle" font-weight="bold">OFF</text>
<text x="364" y="441.2" font-size="7.6" fill="#dfe3ec">Oil Tank</text>
<rect x="248.2" y="454.4" width="262" height="0.8" fill="#232c3a"/>
<text x="257.5" y="466.6" font-size="6" fill="#e6e8ee">Production</text>
<text x="409.6" y="466.6" font-size="6" fill="#e6e8ee">Consumption</text>
<circle cx="346.5" cy="471.6" r="0.9" fill="#5b8ff0"/><text x="348.5" y="472.8" font-size="3.4" fill="#b0b6c4">usage</text>
<circle cx="364.5" cy="471.6" r="0.9" fill="#9a5cf0"/><text x="366.5" y="472.8" font-size="3.4" fill="#b0b6c4">usage</text>
<circle cx="382.6" cy="471.6" r="0.9" fill="#2ee08a"/><text x="384.6" y="472.8" font-size="3.4" fill="#b0b6c4">usage</text>
<g font-size="3" fill="#8890a0" text-anchor="end"><text x="266" y="475">2000</text><text x="266" y="486.6">1000</text><text x="266" y="499.2">0</text></g>
<path d="M263 474 h4 M263 485.6 h4" stroke="#555c68" stroke-width="0.5"/>
<rect x="267" y="498.2" width="154" height="0.6" fill="#2f3a58"/>
<rect x="275.7" y="485" width="1.6" height="13.4" fill="#5b8ff0"/>
<rect x="278.5" y="487.7" width="1.6" height="10.7" fill="#9a5cf0"/>
<rect x="281.3" y="477" width="1.6" height="21.4" fill="#2ee08a"/>
<rect x="300.2" y="490" width="1.6" height="8.4" fill="#5b8ff0"/>
<rect x="303.0" y="474.4" width="1.6" height="24.0" fill="#9a5cf0"/>
<rect x="305.8" y="486" width="1.6" height="12.4" fill="#2ee08a"/>
<rect x="327.2" y="475.6" width="1.6" height="22.8" fill="#5b8ff0"/>
<rect x="330.0" y="486.6" width="1.6" height="11.8" fill="#9a5cf0"/>
<rect x="332.8" y="490" width="1.6" height="8.4" fill="#2ee08a"/>
<rect x="353.2" y="491.3" width="1.6" height="7.1" fill="#5b8ff0"/>
<rect x="356.0" y="485.6" width="1.6" height="12.8" fill="#9a5cf0"/>
<rect x="358.8" y="497" width="1.6" height="1.4" fill="#2ee08a"/>
<rect x="380.2" y="486.6" width="1.6" height="11.8" fill="#5b8ff0"/>
<rect x="383.0" y="494" width="1.6" height="4.4" fill="#9a5cf0"/>
<rect x="385.8" y="492" width="1.6" height="6.4" fill="#2ee08a"/>
<text x="279.3" y="505.4" font-size="3.6" fill="#c0c6d2" text-anchor="middle">Gangnam</text>
<text x="303.8" y="505.4" font-size="3.6" fill="#c0c6d2" text-anchor="middle">Gangbuk</text>
<text x="330.8" y="505.4" font-size="3.6" fill="#c0c6d2" text-anchor="middle">Ganglong</text>
<text x="356.8" y="505.4" font-size="3.6" fill="#c0c6d2" text-anchor="middle">Gananggi do</text>
<text x="383.8" y="505.4" font-size="3.6" fill="#c0c6d2" text-anchor="middle">Gananggi do</text>
<circle cx="422" cy="491.2" r="12.4" fill="#2b3552" stroke="#3f5db8" stroke-width="0.8"/>
<path d="M422 491.2 L422.00 479.20 A12.0 12.0 0 0 1 429.71 482.01 Z" fill="#a070f0"/>
<circle cx="450.4" cy="491.2" r="12.4" fill="#2b3552" stroke="#3f5db8" stroke-width="0.8"/>
<path d="M450.4 491.2 L450.40 479.20 A12.0 12.0 0 0 1 461.53 486.70 Z" fill="#2ebc6a"/>
<rect x="471.2" y="481.5" width="2" height="2" fill="#5b8ff0"/><text x="476" y="483.8" font-size="3.6" fill="#c0c6d2">Gangnam</text>
<rect x="471.2" y="488.6" width="2" height="2" fill="#9a5cf0"/><text x="476" y="490.90000000000003" font-size="3.6" fill="#c0c6d2">Gangbuk</text>
<rect x="471.2" y="495.7" width="2" height="2" fill="#2ee08a"/><text x="476" y="498.0" font-size="3.6" fill="#c0c6d2">Ganglong</text>
<rect x="504.4" y="462" width="6" height="46.4" fill="#183050"/>
<rect x="506" y="363.3" width="6" height="20.3" fill="#2a3242"/>
</g>
<g stroke="#c8cbd0" stroke-width="0.7" fill="none"><rect x="217.6" y="561" width="6.4" height="6.4" rx="0.6"/><path d="M219.8 561 v6.4 M221.8 561 v6.4"/><rect x="229.6" y="561" width="6.4" height="6.4" rx="0.6"/><path d="M232.8 561 v6.4 M229.6 564.2 h6.4"/></g>
</svg>
<!-- LIGHT canvas -->
<div class="a" style="left:510px;top:166px;width:259px;height:12px;background:#d8dde4"></div>
<div class="a" style="left:510px;top:178px;width:259px;height:380px;background:#f2f2f2"></div>
<div class="a" style="left:510px;top:230px;width:240px;height:16px;background:#fff"></div>
<div class="a" style="left:510px;top:246px;width:240px;height:266px;background:#e9edf5"></div>
<div class="a" style="left:510px;top:558px;width:259px;height:13px;background:#c9d1db"></div>
<!-- SEC5 light canvas -->
<svg class="a" style="left:0;top:0" width="1000" height="667" font-family="Liberation Sans">
<defs><clipPath id="cw"><rect x="510" y="166" width="259" height="405"/></clipPath><linearGradient id="hx3" x1="0" x2="0" y1="0" y2="1"><stop offset="0" stop-color="#9ee07a"/><stop offset="1" stop-color="#f0e08a"/></linearGradient><linearGradient id="vg" x1="0" x2="0" y1="0" y2="1"><stop offset="0" stop-color="#c8c8c8"/><stop offset="0.5" stop-color="#8a8a8a"/><stop offset="1" stop-color="#b8b8b8"/></linearGradient><linearGradient id="vg2" x1="0" x2="1"><stop offset="0" stop-color="#8a8a8a"/><stop offset="0.5" stop-color="#e6e6e6"/><stop offset="1" stop-color="#8a8a8a"/></linearGradient><linearGradient id="btn" x1="0" x2="0" y1="0" y2="1"><stop offset="0" stop-color="#f1f3f8"/><stop offset="1" stop-color="#e4e8f1"/></linearGradient></defs>
<g clip-path="url(#cw)">
<path d="M511.06 186.70 v2.2 M514.03 186.70 v2.2 M517.00 186.20 v3.2 M519.97 186.70 v2.2 M522.94 186.70 v2.2 M525.91 186.70 v2.2 M528.88 186.70 v2.2 M531.85 186.20 v3.2 M534.82 186.70 v2.2 M537.79 186.70 v2.2 M540.76 186.70 v2.2 M543.73 186.70 v2.2 M546.70 186.20 v3.2 M549.67 186.70 v2.2 M552.64 186.70 v2.2 M555.61 186.70 v2.2 M558.58 186.70 v2.2 M561.55 186.20 v3.2 M564.52 186.70 v2.2 M567.49 186.70 v2.2 M570.46 186.70 v2.2 M573.43 186.70 v2.2 M576.40 186.20 v3.2 M579.37 186.70 v2.2 M582.34 186.70 v2.2 M585.31 186.70 v2.2 M588.28 186.70 v2.2 M591.25 186.20 v3.2 M594.22 186.70 v2.2 M597.19 186.70 v2.2 M600.16 186.70 v2.2 M603.13 186.70 v2.2 M606.10 186.20 v3.2 M609.07 186.70 v2.2 M612.04 186.70 v2.2 M615.01 186.70 v2.2 M617.98 186.70 v2.2 M620.95 186.20 v3.2 M623.92 186.70 v2.2 M626.89 186.70 v2.2 M629.86 186.70 v2.2 M632.83 186.70 v2.2 M635.80 186.20 v3.2 M638.77 186.70 v2.2 M641.74 186.70 v2.2 M644.71 186.70 v2.2 M647.68 186.70 v2.2 M650.65 186.20 v3.2 M653.62 186.70 v2.2 M656.59 186.70 v2.2 M659.56 186.70 v2.2 M662.53 186.70 v2.2 M665.50 186.20 v3.2 M668.47 186.70 v2.2 M671.44 186.70 v2.2 M674.41 186.70 v2.2 M677.38 186.70 v2.2 M680.35 186.20 v3.2 M683.32 186.70 v2.2 M686.29 186.70 v2.2 M689.26 186.70 v2.2 M692.23 186.70 v2.2 M695.20 186.20 v3.2 M698.17 186.70 v2.2 M701.14 186.70 v2.2 M704.11 186.70 v2.2 M707.08 186.70 v2.2 M710.05 186.20 v3.2 M713.02 186.70 v2.2 M715.99 186.70 v2.2 M718.96 186.70 v2.2 M721.93 186.70 v2.2 M724.90 186.20 v3.2 M727.87 186.70 v2.2 M730.84 186.70 v2.2 M733.81 186.70 v2.2 M736.78 186.70 v2.2 M739.75 186.20 v3.2 M742.72 186.70 v2.2 M745.69 186.70 v2.2 M748.66 186.70 v2.2 M751.63 186.70 v2.2 M754.60 186.20 v3.2 M757.57 186.70 v2.2 M760.54 186.70 v2.2 M763.51 186.70 v2.2 M766.48 186.70 v2.2" stroke="#c9cacc" stroke-width="0.7"/>
<g font-size="4.6" fill="#b4b6ba"><text x="535.3" y="196.8" text-anchor="middle">450</text><text x="565.0" y="196.8" text-anchor="middle">500</text><text x="594.7" y="196.8" text-anchor="middle">550</text><text x="624.4" y="196.8" text-anchor="middle">600</text><text x="654.1" y="196.8" text-anchor="middle">650</text><text x="683.8" y="196.8" text-anchor="middle">700</text><text x="713.5" y="196.8" text-anchor="middle">750</text><text x="743.2" y="196.8" text-anchor="middle">800</text></g>
<g stroke="#6b6f78" stroke-width="0.8" fill="none"><circle cx="516.8" cy="238" r="1.3"/><path d="M514.8 236 l-1.2 -1.2 M518.8 236 l1.2 -1.2 M514.8 240 l-1.2 1.2 M518.8 240 l1.2 1.2"/><rect x="531.8" y="235" width="3.8" height="5.8"/><path d="M537 235.6 v4.8 M538.4 236.6 v3.8"/><path d="M568 240 h4.6 M568.8 240 v-2.6 a1.5 1.5 0 0 1 3 0 v2.6 M569.8 241.2 h1"/><circle cx="587.8" cy="238.2" r="2.4"/><circle cx="587.8" cy="238.2" r="0.9"/></g>
<rect x="601.4" y="233" width="65.6" height="10.4" rx="1.4" fill="#eef0f5"/>
<circle cx="607.2" cy="237" r="1.1" fill="#222"/><path d="M605.2 240.4 a2 1.6 0 0 1 4 0z" fill="#222"/>
<text x="611.4" y="240.2" font-size="5" fill="#4a4e58">admin</text>
<path d="M661 235.8 h-3 v4.8 h3 M659.2 238.2 h3.8 M661.8 237 l1.2 1.2 l-1.2 1.2" stroke="#333" stroke-width="0.7" fill="none"/>
<rect x="675.4" y="234.4" width="0.6" height="7" fill="#d8dbe2"/>
<text x="682.8" y="240" font-size="4.8" fill="#5a5e68">2021-09-15</text>
<path d="M713 236.2 l1.6 -1 l1.6 1 v2.4 l-1.6 1 l-1.6 -1z" stroke="#9ab" stroke-width="0.5" fill="none"/>
<text x="718.8" y="240" font-size="4.8" fill="#5a5e68">PM 09:25</text>
<g stroke="#6cc48a" stroke-width="0.9" fill="none"><path d="M508 261.2 H519.4 V358"/><path d="M508 294.7 H569.1 V323.2 H616.5 V341.2 H722.6 V349"/><path d="M519.4 314.8 H569.1"/><path d="M508 341.2 H519.4"/></g>
<path d="M557 293.3 l2.4 1.4 l-2.4 1.4z M557 313.4 l2.4 1.4 l-2.4 1.4z M676 339.8 l2.4 1.4 l-2.4 1.4z M721.2 348 l1.4 2.4 l1.4 -2.4z" fill="#6cc48a"/>
<rect x="534.8" y="292.9" width="14.6" height="3.6" rx="0.5" fill="url(#vg)"/>
<rect x="541.6" y="284.3" width="1" height="8.6" fill="#e01818"/>
<text x="542" y="301.09999999999997" font-size="3.6" fill="#5a6ad0" text-anchor="middle">Valve</text>
<rect x="534.8" y="313.0" width="14.6" height="3.6" rx="0.5" fill="url(#vg)"/>
<rect x="541.6" y="304.40000000000003" width="1" height="8.6" fill="#e01818"/>
<text x="542" y="321.2" font-size="3.6" fill="#5a6ad0" text-anchor="middle">Valve</text>
<path d="M597.6 312.4 h6.8 l-1.4 3 h-4z" fill="#3a3c40"/><path d="M598.6 313.2 h4.8" stroke="#8aa" stroke-width="0.5"/><rect x="600.4" y="315.4" width="1.2" height="3.4" fill="#444"/><circle cx="601" cy="319.6" r="1" fill="#555"/><rect x="598" y="322.2" width="6" height="3" fill="#e9edf5"/><text x="601" y="324.8" font-size="3" fill="#333" text-anchor="middle">(wan)</text><text x="601" y="330.6" font-size="3.6" fill="#5a6ad0" text-anchor="middle">TM 401</text>
<rect x="585.2" y="256.4" width="156.8" height="25.6" rx="1.6" fill="#d5dcea"/>
<circle cx="607" cy="259.6" r="6.6" fill="#eef2f8" stroke="#22b04a" stroke-width="1"/>
<path d="M607.8 254.8 l-3 5.6 h2.4 l-0.8 4 l3 -5.6 h-2.4z" fill="#22b04a"/>
<text x="590.8" y="276.4" font-size="7" fill="#2a3042" stroke="#2a3042" stroke-width="0.3" textLength="31.4" lengthAdjust="spacingAndGlyphs">H2 Charger</text><rect x="688.6" y="258.6" width="0.5" height="21" fill="#c4ccda"/>
<g font-size="3.4" fill="#7a8296" text-anchor="middle"><text x="634.4" y="272.6">Charger</text><text x="634.4" y="276.6">Status</text><text x="651.6" y="272.6">Connection</text><text x="651.6" y="276.6">Status</text></g>
<g font-size="3.8" fill="#5a6276"><text x="692" y="266">Temperature</text><text x="692" y="274.6">Charge</text></g><rect x="716.2" y="261" width="23.4" height="7.4" fill="#0a1420" stroke="#f0f2f6" stroke-width="0.5"/><text x="731.6" y="266.6" font-size="5.6" fill="#36e07a" text-anchor="end" font-weight="bold">26</text><text x="735" y="266.4" font-size="3" fill="#889">°c</text><rect x="716.2" y="269.6" width="23.4" height="7.4" fill="#0a1420" stroke="#f0f2f6" stroke-width="0.5"/><text x="732" y="275.2" font-size="5.2" fill="#36e07a" text-anchor="end" font-weight="bold">4000</text><text x="734.4" y="275" font-size="3" fill="#889">kg</text><path d="M691 290 V337.6 a2.6 2.6 0 0 1 0 5.2 V355" stroke="#e8508a" stroke-width="0.9" fill="none"/>
<path d="M689.6 290.4 l1.4 -2.4 l1.4 2.4z" fill="#e8508a"/>
<text x="695" y="294.6" font-size="3.6" fill="#e8508a">To Charger</text>
<rect x="689.1" y="310.8" width="3.8" height="15" rx="0.5" fill="url(#vg2)"/>
<rect x="693.4" y="317.6" width="8.6" height="1.6" fill="#e01818"/>
<text x="703.2" y="319.6" font-size="3.6" fill="#5a6ad0">Valve</text>
<rect x="644" y="337" width="15.8" height="10.2" rx="1.2" fill="url(#hx3)" opacity="0.9"/>
<rect x="645" y="340" width="13.8" height="2" fill="#bfe8a8" opacity="0.8"/>
<g font-size="3.2" fill="#8a92a6" text-anchor="middle"><text x="651.8" y="334.4">E-401</text><text x="651.8" y="353.6">Heat</text><text x="651.8" y="357">Exchange</text></g>
<path d="M637 346.4 V426.7 H602 M666.5 346.4 V431.7 H602 M637 346.4 H644 M659.8 346.4 H666.5" stroke="#f2c040" stroke-width="0.9" fill="none"/>
<circle cx="666.5" cy="387" r="1" fill="#f2c040"/><circle cx="637" cy="401" r="0.9" fill="#f2c040"/><circle cx="620" cy="426.7" r="0.9" fill="#f2c040"/>
<rect x="507.2" y="363" width="111.8" height="20.8" rx="0.8" fill="#212a3b"/>
<path d="M521 348.8 l3 3 M520 351 a2 2 0 1 1 3 -2" stroke="#666" stroke-width="1.2" fill="none"/>
<rect x="521.2" y="350.6" width="6" height="5" rx="1.6" fill="#b8b8b8"/><circle cx="533" cy="352.2" r="3.4" fill="#5a5c60"/><circle cx="533" cy="352.2" r="2" fill="#8a8c90"/><rect x="536" y="351" width="2.4" height="2.4" fill="#444"/>
<rect x="515.6" y="356" width="29.4" height="11" rx="5" fill="url(#mg2)"/>
<path d="M519 367 v3 M541 367 v3" stroke="#ccc" stroke-width="0.7"/>
<text x="514" y="380.4" font-size="5.4" fill="#e8ecf4">Air Compressor</text>
<path d="M554 373 H580" stroke="#5a72b0" stroke-width="1.2"/><path d="M579 371 l3 2 l-3 2z" fill="#5a72b0"/>
<text x="588.2" y="375.6" font-size="5.6" font-weight="bold" font-style="italic" fill="#36e07a">8888.0</text><text x="605.4" y="375.2" font-size="3" fill="#aab">bar</text>
<rect x="506" y="411" width="103.4" height="36" rx="0.8" fill="#d5dcea"/>
<g font-size="3.6" fill="#6a7286"><text x="503" y="421">Main</text><text x="528" y="421">Sub</text></g>
<circle cx="523" cy="414" r="3.6" fill="#f4f4f4" stroke="#555" stroke-width="0.6"/><path d="M523 414 l1.4 -1.6" stroke="#c03030" stroke-width="0.5"/>
<rect x="493" y="424.6" width="23.6" height="6.4" fill="#08121c" stroke="#3a4050" stroke-width="0.3"/>
<text x="496.6" y="429.6" font-size="5" fill="#36e07a" font-weight="bold">19.3</text><text x="510" y="429.20000000000005" font-size="3" fill="#889">°c</text>
<rect x="518" y="424.6" width="20.4" height="6.4" fill="#08121c" stroke="#3a4050" stroke-width="0.3"/>
<text x="521.4" y="429.6" font-size="5" fill="#36e07a" font-weight="bold">19.3</text><text x="533.6" y="429.20000000000005" font-size="3" fill="#889">°c</text>
<rect x="493" y="433" width="23.6" height="6.4" fill="#08121c" stroke="#3a4050" stroke-width="0.3"/>
<text x="496.6" y="438" font-size="5" fill="#36e07a" font-weight="bold">21.5</text><text x="510" y="437.6" font-size="3" fill="#889">°c</text>
<rect x="518" y="433" width="20.4" height="6.4" fill="#08121c" stroke="#3a4050" stroke-width="0.3"/>
<text x="521.4" y="438" font-size="5" fill="#36e07a" font-weight="bold">21.5</text><text x="533.6" y="437.6" font-size="3" fill="#889">°c</text>
<rect x="544.6" y="405.2" width="58.4" height="34.6" rx="1.2" fill="#f4f4f4" stroke="#c0c4cc" stroke-width="0.5"/>
<rect x="547" y="408" width="51" height="12.6" fill="#6a6c70"/><path d="M564 408 v12.6 M581 408 v12.6" stroke="#f4f4f4" stroke-width="0.8"/>
<rect x="548" y="409" width="15" height="10.6" fill="#8a8c90"/><rect x="565" y="409" width="15" height="10.6" fill="#8a8c90"/><rect x="582" y="409" width="15" height="10.6" fill="#8a8c90"/>
<rect x="548.0" y="423.6" width="1.4" height="5" fill="#6a6c70"/><rect x="552.2" y="423.6" width="1.4" height="5" fill="#6a6c70"/><rect x="556.4" y="423.6" width="1.4" height="5" fill="#6a6c70"/><rect x="560.6" y="423.6" width="1.4" height="5" fill="#6a6c70"/><rect x="564.8" y="423.6" width="1.4" height="5" fill="#6a6c70"/><rect x="569.0" y="423.6" width="1.4" height="5" fill="#6a6c70"/><rect x="573.2" y="423.6" width="1.4" height="5" fill="#6a6c70"/><rect x="577.4" y="423.6" width="1.4" height="5" fill="#6a6c70"/><rect x="581.6" y="423.6" width="1.4" height="5" fill="#6a6c70"/><rect x="585.8" y="423.6" width="1.4" height="5" fill="#6a6c70"/><rect x="590.0" y="423.6" width="1.4" height="5" fill="#6a6c70"/><rect x="594.2" y="423.6" width="1.4" height="5" fill="#6a6c70"/><rect x="548.0" y="430.8" width="1.4" height="5" fill="#6a6c70"/><rect x="552.2" y="430.8" width="1.4" height="5" fill="#6a6c70"/><rect x="556.4" y="430.8" width="1.4" height="5" fill="#6a6c70"/><rect x="560.6" y="430.8" width="1.4" height="5" fill="#6a6c70"/><rect x="564.8" y="430.8" width="1.4" height="5" fill="#6a6c70"/><rect x="569.0" y="430.8" width="1.4" height="5" fill="#6a6c70"/><rect x="573.2" y="430.8" width="1.4" height="5" fill="#6a6c70"/><rect x="577.4" y="430.8" width="1.4" height="5" fill="#6a6c70"/><rect x="581.6" y="430.8" width="1.4" height="5" fill="#6a6c70"/><rect x="585.8" y="430.8" width="1.4" height="5" fill="#6a6c70"/><rect x="590.0" y="430.8" width="1.4" height="5" fill="#6a6c70"/><rect x="594.2" y="430.8" width="1.4" height="5" fill="#6a6c70"/>
<rect x="680.2" y="363.1" width="62.1" height="84.2" rx="1.8" fill="#d4dbe9"/>
<path d="M688.2 356 q0 -1.5 1.5 -1.5 h42.6 q2.6 0.2 3.2 3.4 v11.9 h-47.3z" fill="#f4f6f8"/><path d="M688.2 356.4 q0 -1.9 1.5 -1.9 h42.6 q2.4 0.2 3 2 h-47.1z" fill="#1f86e0"/><path d="M688.6 356.3 h45.6 q1 0.6 1 2.2 v6 h-46.6z" fill="#11151b"/><path d="M690.6 360 h14 M713 360 h12" stroke="#3e4a5a" stroke-width="0.6"/><rect x="707.4" y="356.4" width="4" height="11.6" fill="#11151b"/><rect x="727.2" y="356.4" width="4.6" height="11.6" fill="#11151b"/><rect x="688.2" y="367.4" width="47.3" height="2.3" fill="#1f86e0"/><circle cx="697.5" cy="368.6" r="2.3" fill="#0c0e12"/><circle cx="697.5" cy="368.6" r="1" fill="#f0f0f0"/><circle cx="722.6" cy="368.6" r="2.3" fill="#0c0e12"/><circle cx="722.6" cy="368.6" r="1" fill="#f0f0f0"/><text x="692.4" y="380.6" font-size="7" fill="#2a3042" stroke="#2a3042" stroke-width="0.3" textLength="38.2" lengthAdjust="spacingAndGlyphs">Hydrogen Bus</text>
<text x="688" y="391.6" font-size="3" fill="#8a92a6">Vehicle Tank</text>
<rect x="686" y="421.2" width="50" height="0.5" fill="#bcc4d4"/>
<text x="687.6" y="399.2" font-size="3.8" fill="#5a6276">Capacity</text>
<rect x="713.7" y="394.59999999999997" width="22.6" height="6.6" fill="#08121c" stroke="#f2f4f8" stroke-width="0.5"/>
<text x="729" y="399.79999999999995" font-size="5" font-weight="bold" fill="#36e07a" text-anchor="end">47</text><text x="731" y="399.4" font-size="2.8" fill="#889">%</text>
<text x="687.6" y="407.6" font-size="3.8" fill="#5a6276">Pressure</text>
<rect x="713.7" y="403.0" width="22.6" height="6.6" fill="#08121c" stroke="#f2f4f8" stroke-width="0.5"/>
<text x="729" y="408.2" font-size="5" font-weight="bold" fill="#36e07a" text-anchor="end">103.2</text><text x="731" y="407.8" font-size="2.8" fill="#889">bar</text>
<text x="687.6" y="415.90000000000003" font-size="3.8" fill="#5a6276">Temperature</text>
<rect x="713.7" y="411.3" width="22.6" height="6.6" fill="#08121c" stroke="#f2f4f8" stroke-width="0.5"/>
<text x="729" y="416.5" font-size="5" font-weight="bold" fill="#36e07a" text-anchor="end">20</text><text x="731" y="416.1" font-size="2.8" fill="#889">°c</text>
<text x="687.6" y="430.2" font-size="3.8" fill="#5a6276">Recent SOC</text>
<rect x="713.7" y="425.59999999999997" width="22.6" height="6.6" fill="#08121c" stroke="#f2f4f8" stroke-width="0.5"/>
<text x="729" y="430.79999999999995" font-size="5" font-weight="bold" fill="#36e07a" text-anchor="end">47</text><text x="731" y="430.4" font-size="2.8" fill="#889">%</text>
<text x="687.6" y="438.7" font-size="3.8" fill="#5a6276">H2 Charge</text>
<rect x="713.7" y="434.09999999999997" width="22.6" height="6.6" fill="#08121c" stroke="#f2f4f8" stroke-width="0.5"/>
<text x="729" y="439.29999999999995" font-size="5" font-weight="bold" fill="#36e07a" text-anchor="end">103.2</text><text x="731" y="438.9" font-size="2.8" fill="#889">kg</text>
<rect x="504" y="455.3" width="245.3" height="56.9" fill="#d8deea"/>
<rect x="504" y="510.4" width="245.3" height="1.8" fill="#cdd4e2"/>
<rect x="504" y="461.5" width="36" height="46.2" rx="1.6" fill="url(#btn)" stroke="#e2e6ee" stroke-width="0.4"/>
<rect x="504.5" y="462" width="35" height="9.4" rx="1.2" fill="#f6f7fa"/>
<text x="522" y="467.8" font-size="3.4" fill="#a4aab8" text-anchor="middle">Operating</text>
<text x="522" y="501.6" font-size="6.4" fill="#3a4052" text-anchor="middle">Start</text>
<rect x="544.1" y="461.5" width="36.0" height="46.2" rx="1.6" fill="url(#btn)" stroke="#e2e6ee" stroke-width="0.4"/>
<rect x="544.6" y="462" width="35.0" height="9.4" rx="1.2" fill="#f6f7fa"/>
<text x="562.1" y="467.8" font-size="3.4" fill="#a4aab8" text-anchor="middle">Operating</text>
<text x="562.1" y="501.6" font-size="6.4" fill="#3a4052" text-anchor="middle">Stop</text>
<rect x="584" y="461.5" width="36.39999999999998" height="46.2" rx="1.6" fill="url(#btn)" stroke="#e2e6ee" stroke-width="0.4"/>
<rect x="584.5" y="462" width="35.39999999999998" height="9.4" rx="1.2" fill="#f6f7fa"/>
<text x="602.2" y="467.8" font-size="3.4" fill="#a4aab8" text-anchor="middle">Operating</text>
<text x="602.2" y="501.6" font-size="6.4" fill="#3a4052" text-anchor="middle">Manual</text>
<rect x="624.4" y="461.5" width="36.200000000000045" height="46.2" rx="1.6" fill="url(#btn)" stroke="#e2e6ee" stroke-width="0.4"/>
<rect x="624.9" y="462" width="35.200000000000045" height="9.4" rx="1.2" fill="#f6f7fa"/>
<text x="642.5" y="467.8" font-size="3.4" fill="#a4aab8" text-anchor="middle">Setting</text>
<text x="642.5" y="501.6" font-size="6.4" fill="#3a4052" text-anchor="middle">Sound</text>
<rect x="664.6" y="461.5" width="36.39999999999998" height="46.2" rx="1.6" fill="url(#btn)" stroke="#e2e6ee" stroke-width="0.4"/>
<rect x="665.1" y="462" width="35.39999999999998" height="9.4" rx="1.2" fill="#f6f7fa"/>
<text x="682.8" y="467.8" font-size="3.4" fill="#a4aab8" text-anchor="middle">Alarm</text>
<text x="682.8" y="501.6" font-size="6.4" fill="#3a4052" text-anchor="middle">Reset</text>
<path d="M518 479.6 l7.6 5 l-7.6 5z" fill="#a8b4ea" stroke="#5b78e8" stroke-width="0.9"/>
<rect x="557.8" y="480" width="8.6" height="8.6" fill="#a8b4ea" stroke="#5b78e8" stroke-width="0.9"/>
<text x="602.3" y="489.6" font-size="11" fill="#5b78e8" text-anchor="middle">M</text>
<g stroke="#5b78e8" stroke-width="0.9" fill="none"><path d="M637.6 482.4 h2.4 l3.4 -2.6 v9.4 l-3.4 -2.6 h-2.4z M645.4 482 a3 3 0 0 1 0 5 M647.4 480.6 a5 5 0 0 1 0 7.8"/><path d="M679.2 481.2 a4 4 0 1 0 4.6 -0.4"/></g>
<path d="M679.4 478.8 v3 h-3z" fill="#5b78e8"/>
<rect x="705.2" y="461.3" width="36.8" height="47" rx="1.8" fill="#c9512a"/>
<g transform="translate(723.6 476.6)" stroke="#fff" stroke-width="1.9" fill="none"><path d="M-1.2 -4.4 A4.6 4.6 0 0 1 4.2 -1.8"/><path d="M4.4 1.2 A4.6 4.6 0 0 1 -0.9 4.5"/><path d="M-3.6 2.8 A4.6 4.6 0 0 1 -3.8 -2.6"/></g><text x="716" y="493" font-size="7.2" fill="#fff" textLength="15.4" lengthAdjust="spacingAndGlyphs" stroke="#fff" stroke-width="0.25">STOP</text><text x="723.6" y="505.4" font-size="3.4" fill="#f2b08e" text-anchor="middle">Emergency</text>
</g>
</svg>
<!-- property panel -->
<div class="a" style="left:769px;top:166px;width:139px;height:405px;background:#f2f2f2;border-left:1px solid #e2e2e2"></div>
<div class="a" style="left:908px;top:166px;width:21px;height:405px;background:#f3f3f3;border-left:1px solid #e4e4e4"></div>
<!-- SEC6 property -->
<svg class="a" style="left:0;top:0" width="1000" height="667" font-family="Liberation Sans">
<defs><linearGradient id="cyl" x1="0" x2="1"><stop offset="0" stop-color="#8ea0bc"/><stop offset="0.35" stop-color="#dfe6f0"/><stop offset="0.6" stop-color="#b8c6da"/><stop offset="1" stop-color="#7f92b0"/></linearGradient><linearGradient id="sw1" x1="0" x2="1"><stop offset="0" stop-color="#eef1f6"/><stop offset="1" stop-color="#8a9ab8"/></linearGradient><pattern id="pt" width="3" height="3" patternUnits="userSpaceOnUse"><rect width="3" height="3" fill="#1c2d68"/><circle cx="1.5" cy="1.5" r="1.1" fill="none" stroke="#3d56a8" stroke-width="0.4"/></pattern></defs>
<text x="777.8" y="183.8" font-size="7.4" fill="#30343c">Property</text>
<g stroke="#4a72e8" stroke-width="0.9" fill="none"><path d="M876 178.4 h3.4 M876.6 178.4 v3 h2.2 v-3 M875.4 181.4 h4.6 M877.7 181.4 v2.6"/><path d="M893.8 178.8 l4.2 4.2 M898 178.8 l-4.2 4.2"/></g>
<g fill="#3a3e46"><rect x="778.5" y="197.6" width="0.8" height="7"/><rect x="779.1" y="199" width="5" height="1.6"/><rect x="779.9" y="201.6" width="3.4" height="1.6"/><rect x="794.8" y="197.6" width="0.8" height="7"/><rect x="792.4" y="199" width="5" height="1.6"/><rect x="793.1999999999999" y="201.6" width="3.4" height="1.6"/><rect x="811.0" y="197.6" width="0.8" height="7"/><rect x="805.6" y="199" width="5" height="1.6"/><rect x="806.4" y="201.6" width="3.4" height="1.6"/><rect x="818.2" y="197.8" width="7" height="0.8"/><rect x="819.6" y="198.6" width="1.6" height="5.4"/><rect x="822.2" y="199.4" width="1.6" height="3.8"/><rect x="832.6" y="200.8" width="7" height="0.8"/><rect x="834" y="198.6" width="1.6" height="5.4"/><rect x="836.6" y="199.4" width="1.6" height="3.8"/><rect x="847.0" y="203.8" width="7" height="0.8"/><rect x="848.4" y="198.6" width="1.6" height="5.4"/><rect x="851.0" y="199.4" width="1.6" height="3.8"/><rect x="872.4" y="198" width="6.4" height="0.8"/><rect x="872.4" y="203.6" width="6.4" height="0.8"/><rect x="873.4" y="200.4" width="4.4" height="1.6"/><rect x="891" y="197.8" width="0.8" height="6.8"/><rect x="897" y="197.8" width="0.8" height="6.8"/><rect x="893.4" y="199" width="2" height="4.4"/></g>
<rect x="778.2" y="219.4" width="120.7" height="40.3" fill="#e1e6ee"/>
<text x="783" y="228.6" font-size="5.2" fill="#b6bdcb">Preview</text>
<rect x="830.6" y="229.4" width="16" height="22.6" rx="4" fill="url(#cyl)"/>
<ellipse cx="838.6" cy="232" rx="7.4" ry="2.2" fill="#e8edf5" opacity="0.7"/>
<ellipse cx="838.6" cy="249.6" rx="7.6" ry="2" fill="#c4d0e2" opacity="0.7"/>
<g font-size="6.1" fill="#33373f"><text x="778.6" y="280.8">Name</text><text x="778.6" y="302.3">Position</text><text x="778.6" y="323.8">Size</text><text x="778.6" y="345.4">Rotation</text><text x="778.6" y="366.8">Opacity</text><text x="778.6" y="417">Color</text><text x="778.6" y="439">Opacity</text><text x="778.6" y="460.3">Pattren</text><text x="778.6" y="509.3">Color</text><text x="778.6" y="530.8">Opacity</text><text x="778.6" y="552.2">Pattren</text></g>
<rect x="822.4" y="272.8" width="75.80000000000007" height="12" fill="#fff" stroke="#e4e6ea" stroke-width="0.5"/><text x="860.3" y="280.8" font-size="6.1" fill="#2a2e36" text-anchor="middle">Object 1</text>
<rect x="822.4" y="294.3" width="28.600000000000023" height="12" fill="#fff" stroke="#e4e6ea" stroke-width="0.5"/><text x="832.8" y="302.3" font-size="6.1" fill="#2a2e36" text-anchor="middle">100</text><path d="M844.8 299.1 l1.4 -1.5 l1.4 1.5 M844.8 301.5 l1.4 1.5 l1.4 -1.5" stroke="#7d9ae6" stroke-width="0.6" fill="none"/><rect x="870.0" y="294.3" width="28.200000000000045" height="12" fill="#fff" stroke="#e4e6ea" stroke-width="0.5"/><text x="880.4" y="302.3" font-size="6.1" fill="#2a2e36" text-anchor="middle">100</text><path d="M892.0 299.1 l1.4 -1.5 l1.4 1.5 M892.0 301.5 l1.4 1.5 l1.4 -1.5" stroke="#7d9ae6" stroke-width="0.6" fill="none"/>
<rect x="822.4" y="315.8" width="28.600000000000023" height="12" fill="#fff" stroke="#e4e6ea" stroke-width="0.5"/><text x="832.8" y="323.8" font-size="6.1" fill="#2a2e36" text-anchor="middle">161</text><path d="M844.8 320.6 l1.4 -1.5 l1.4 1.5 M844.8 323.0 l1.4 1.5 l1.4 -1.5" stroke="#7d9ae6" stroke-width="0.6" fill="none"/><rect x="870.0" y="315.8" width="28.200000000000045" height="12" fill="#fff" stroke="#e4e6ea" stroke-width="0.5"/><text x="880.4" y="323.8" font-size="6.1" fill="#2a2e36" text-anchor="middle">600</text><path d="M892.0 320.6 l1.4 -1.5 l1.4 1.5 M892.0 323.0 l1.4 1.5 l1.4 -1.5" stroke="#7d9ae6" stroke-width="0.6" fill="none"/>
<g font-size="5" fill="#4a72e8"><text x="815.4" y="302.2">X</text><text x="862.8" y="302.2">Y</text><text x="815.4" y="323.6">X</text><text x="862.8" y="323.6">Y</text></g>
<circle cx="828.6" cy="343.6" r="5.8" fill="#d2d6de" stroke="#c2c6ce" stroke-width="0.4"/><rect x="828.2" y="338.4" width="0.8" height="3.6" fill="#3a62d8"/>
<text x="851" y="345.6" font-size="6.1" fill="#33373f">Angle</text>
<rect x="870" y="337.4" width="28.2" height="12" fill="#fff" stroke="#e4e6ea" stroke-width="0.5"/><text x="885" y="345.4" font-size="6.1" fill="#2a2e36" text-anchor="middle">0</text><text x="892.6" y="344.6" font-size="4.4" fill="#30343c">°</text>
<rect x="822.6" y="364.40000000000003" width="39.6" height="0.9" fill="#3a62d8"/><circle cx="862.6" cy="364.8" r="1.8" fill="#fff" stroke="#d0d4dc" stroke-width="0.4"/>
<rect x="870.0" y="358.8" width="28.200000000000045" height="12" fill="#fff" stroke="#e4e6ea" stroke-width="0.5"/><text x="880.4" y="366.8" font-size="6.1" fill="#2a2e36" text-anchor="middle">100</text><path d="M892.0 363.6 l1.4 -1.5 l1.4 1.5 M892.0 366.0 l1.4 1.5 l1.4 -1.5" stroke="#7d9ae6" stroke-width="0.6" fill="none"/>
<rect x="822.6" y="436.6" width="39.6" height="0.9" fill="#3a62d8"/><circle cx="862.6" cy="437" r="1.8" fill="#fff" stroke="#d0d4dc" stroke-width="0.4"/>
<rect x="870.0" y="431.0" width="28.200000000000045" height="12" fill="#fff" stroke="#e4e6ea" stroke-width="0.5"/><text x="880.4" y="439" font-size="6.1" fill="#2a2e36" text-anchor="middle">100</text><path d="M892.0 435.8 l1.4 -1.5 l1.4 1.5 M892.0 438.2 l1.4 1.5 l1.4 -1.5" stroke="#7d9ae6" stroke-width="0.6" fill="none"/>
<rect x="822.6" y="528.4" width="39.6" height="0.9" fill="#3a62d8"/><circle cx="862.6" cy="528.8" r="1.8" fill="#fff" stroke="#d0d4dc" stroke-width="0.4"/>
<rect x="870.0" y="522.8" width="28.200000000000045" height="12" fill="#fff" stroke="#e4e6ea" stroke-width="0.5"/><text x="880.4" y="530.8" font-size="6.1" fill="#2a2e36" text-anchor="middle">100</text><path d="M892.0 527.6 l1.4 -1.5 l1.4 1.5 M892.0 530.0 l1.4 1.5 l1.4 -1.5" stroke="#7d9ae6" stroke-width="0.6" fill="none"/>
<rect x="769.3" y="383.2" width="138.3" height="17.3" fill="#d9dee6"/>
<rect x="769.3" y="474.4" width="138.3" height="17.1" fill="#d9dee6"/>
<path d="M778.6 391 l1.2 1.2 l1.2 -1.2 M778.6 482.2 l1.2 1.2 l1.2 -1.2" stroke="#3c4048" stroke-width="0.7" fill="none"/>
<g font-size="6" fill="#30343c"><text x="787" y="394.2">Object</text><text x="788" y="485.2">Line</text></g>
<rect x="822.8" y="412.2" width="5.6" height="5.6" fill="#2f5ee0"/><path d="M824 415 l1.2 1.2 l2 -2.2" stroke="#fff" stroke-width="0.7" fill="none"/>
<rect x="833" y="411" width="16.6" height="8" fill="url(#sw1)" stroke="#e0e2e6" stroke-width="0.3"/>
<path d="M890.6 418.4 l1 -1 l2.6 -2.6 M892.8 413.4 l1.6 1.6 M893.6 414.2 l2 -2 a0.9 0.9 0 0 0 -1.2 -1.2 l-2 2" stroke="#2a2d33" stroke-width="0.8" fill="none"/>
<rect x="823" y="455.7" width="5.2" height="5.2" fill="#fafafa" stroke="#c4c8d0" stroke-width="0.5"/>
<rect x="833" y="454.3" width="16.6" height="8" fill="#f4f4f4" stroke="#e0e2e6" stroke-width="0.3"/>
<path d="M890.6 461.7 l1 -1 l2.6 -2.6 M892.8 456.7 l1.6 1.6 M893.6 457.5 l2 -2 a0.9 0.9 0 0 0 -1.2 -1.2 l-2 2" stroke="#2a2d33" stroke-width="0.8" fill="none"/>
<rect x="823" y="504.7" width="5.2" height="5.2" fill="#fafafa" stroke="#c4c8d0" stroke-width="0.5"/>
<rect x="833" y="503.3" width="16.6" height="8" fill="#2f6ae6" stroke="#e0e2e6" stroke-width="0.3"/>
<path d="M890.6 510.7 l1 -1 l2.6 -2.6 M892.8 505.7 l1.6 1.6 M893.6 506.5 l2 -2 a0.9 0.9 0 0 0 -1.2 -1.2 l-2 2" stroke="#2a2d33" stroke-width="0.8" fill="none"/>
<rect x="823" y="547.6" width="5.2" height="5.2" fill="#fafafa" stroke="#c4c8d0" stroke-width="0.5"/>
<rect x="833" y="546.2" width="16.6" height="8" fill="url(#pt)" stroke="#e0e2e6" stroke-width="0.3"/>
<path d="M890.6 553.6 l1 -1 l2.6 -2.6 M892.8 548.6 l1.6 1.6 M893.6 549.4000000000001 l2 -2 a0.9 0.9 0 0 0 -1.2 -1.2 l-2 2" stroke="#2a2d33" stroke-width="0.8" fill="none"/>
<g stroke="#3a3e46" stroke-width="0.8" fill="none"><path d="M915 187.6 h7 M915 190.4 h7 M915 193.2 h7 M917.4 186.8 v2 M920 189.6 v2"/><rect x="915" y="209.6" width="7" height="7.6" rx="0.6"/><path d="M919 213.4 h3"/><path d="M918.5 233 l3.6 1.6 l-3.6 1.6 l-3.6 -1.6z M914.9 236.6 l3.6 1.6 l3.6 -1.6 M914.9 238.6 l3.6 1.6 l3.6 -1.6"/><circle cx="918.5" cy="259.6" r="3.4"/><path d="M918.5 257.6 v2 h1.4"/><path d="M921.4 300.8 v-2 l-1.6 -1.6 h-4 v8.4 h3"/><path d="M920 304 l1 1 l1.8 -2"/></g>
<rect x="911" y="280.3" width="15" height="0.6" fill="#dadde2"/><rect x="911" y="345.3" width="15" height="0.6" fill="#dadde2"/>
<circle cx="918.5" cy="324.6" r="6" fill="#ececee"/><path d="M916.4 321.4 l5.2 3.2 l-5.2 3.2z" fill="#f05a22"/>
<rect x="912.4" y="360" width="12.2" height="12" fill="none" stroke="#d8dadf" stroke-width="0.5" stroke-dasharray="1 1"/><path d="M915.6 366 h6 M918.5 363 v6" stroke="#8aa0d0" stroke-width="0.7"/>
<rect x="912.4" y="383" width="12.2" height="12" fill="none" stroke="#d8dadf" stroke-width="0.5" stroke-dasharray="1 1"/><path d="M915.6 389 h6 M918.5 386 v6" stroke="#8aa0d0" stroke-width="0.7"/>
<rect x="912.4" y="406" width="12.2" height="12" fill="none" stroke="#d8dadf" stroke-width="0.5" stroke-dasharray="1 1"/><path d="M915.6 412 h6 M918.5 409 v6" stroke="#8aa0d0" stroke-width="0.7"/>
<rect x="912.4" y="429.5" width="12.2" height="12" fill="none" stroke="#d8dadf" stroke-width="0.5" stroke-dasharray="1 1"/><path d="M915.6 435.5 h6 M918.5 432.5 v6" stroke="#8aa0d0" stroke-width="0.7"/>
</svg>
</body></html>
